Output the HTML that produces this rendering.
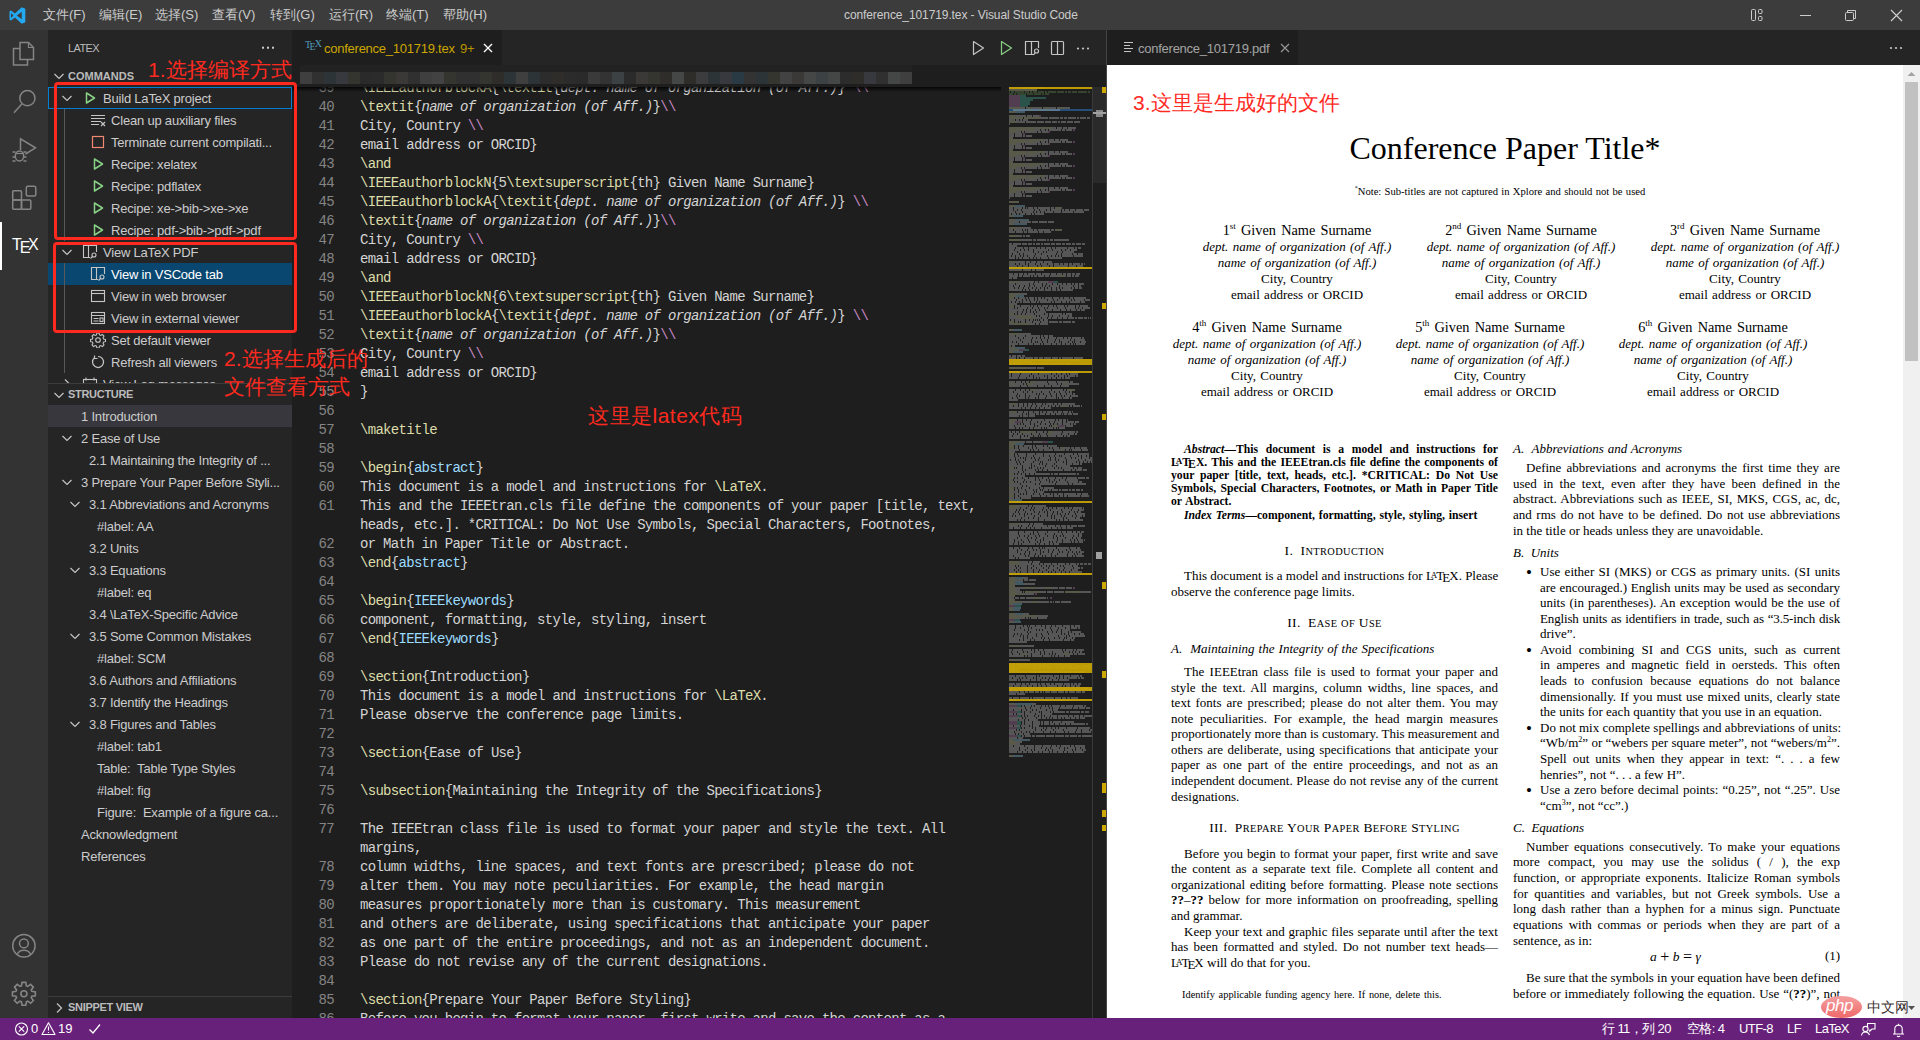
<!DOCTYPE html><html><head><meta charset="utf-8"><style>
*{box-sizing:border-box}
body{margin:0;width:1920px;height:1040px;overflow:hidden;background:#1e1e1e;position:relative;font-family:"Liberation Sans",sans-serif;font-size:13px;color:#ccc}
.a{position:absolute}
.t{position:absolute;white-space:pre;line-height:22px}
.mono{font-family:"Liberation Mono",monospace}
.code{position:absolute;left:0;white-space:pre;font-family:"Liberation Mono",monospace;font-size:14px;letter-spacing:-0.703px;line-height:19px;color:#d4d4d4}
.ln{position:absolute;width:42px;text-align:right;white-space:pre;font-family:"Liberation Mono",monospace;font-size:14px;letter-spacing:-0.703px;line-height:19px;color:#858585}
.k{color:#dcdcaa}.v{color:#9cdcfe}.p{color:#c586c0}.i{font-style:italic}
.row{position:absolute;left:0;width:244px;height:22px;line-height:22px;white-space:pre;color:#cccccc}
.serif{font-family:"Liberation Serif",serif;color:#000}
</style></head><body>
<div class="a" style="left:0;top:0;width:1920px;height:30px;background:#3c3c3c"></div>
<svg class="a" style="left:9px;top:7px" width="17" height="17" viewBox="0 0 100 100">
<path d="M96 11 L75 1 L35 38 L12 21 L3 25 L3 75 L12 79 L35 62 L75 99 L96 89 Z M75 28 L75 72 L46 50 Z M12 36 L26 50 L12 64 Z" fill="#23a9f2"/>
</svg>
<div class="t" style="left:43px;top:4px;color:#cccccc;font-size:13px">文件(F)</div>
<div class="t" style="left:99px;top:4px;color:#cccccc;font-size:13px">编辑(E)</div>
<div class="t" style="left:155px;top:4px;color:#cccccc;font-size:13px">选择(S)</div>
<div class="t" style="left:212px;top:4px;color:#cccccc;font-size:13px">查看(V)</div>
<div class="t" style="left:270px;top:4px;color:#cccccc;font-size:13px">转到(G)</div>
<div class="t" style="left:329px;top:4px;color:#cccccc;font-size:13px">运行(R)</div>
<div class="t" style="left:386px;top:4px;color:#cccccc;font-size:13px">终端(T)</div>
<div class="t" style="left:443px;top:4px;color:#cccccc;font-size:13px">帮助(H)</div>
<div class="t" style="left:844px;top:4px;color:#cccccc;font-size:12px;letter-spacing:-0.1px">conference_101719.tex - Visual Studio Code</div>
<svg class="a" style="left:1740px;top:0" width="180" height="30">
<g fill="none" stroke="#cccccc" stroke-width="1">
<rect x="11.5" y="9.5" width="4" height="11" rx="1"/><rect x="18.5" y="9.5" width="3.5" height="4" rx="1"/><rect x="18.5" y="16.5" width="3.5" height="4" rx="1"/>
<line x1="60" y1="15.5" x2="71" y2="15.5"/>
<rect x="105.5" y="12.5" width="8" height="8" rx="1"/><path d="M107.5 12.5 V10.5 H115.5 V18.5 H113.5"/>
<path d="M151 10 L162 21 M162 10 L151 21" stroke-width="1.2"/>
</g></svg>
<div class="a" style="left:0;top:30px;width:48px;height:988px;background:#333333"></div>
<svg class="a" style="left:0;top:30px" width="48" height="988">
<g fill="none" stroke="#858585" stroke-width="1.5">
<path d="M20 12.5 H28.5 L33.5 17.5 V29.5 H20 Z"/><path d="M28.5 12.5 V17.5 H33.5" stroke-width="1.2"/><path d="M20 18.5 H13.5 V35 H27.5 V29.5"/>
<circle cx="27.4" cy="68.2" r="7.6"/><path d="M21.8 74 L14 82.8"/>
<path d="M20.5 120 V108.8 L35.5 117.8 L25.5 124"/>
<ellipse cx="19.5" cy="126" rx="4.2" ry="5"/><path d="M15.5 123.5 H23.5" stroke-width="1.2"/><path d="M12.5 122 H15.5 M23.5 122 H26.5 M12.5 127 H15 M24 127 H26.5 M12.5 131 H15.5 M23.5 131 H26.5" stroke-width="1.3"/>
<rect x="12.7" y="160.7" width="8.8" height="9.3" rx="1"/><rect x="12.7" y="170" width="8.8" height="9.3" rx="1"/><rect x="21.5" y="170" width="9.3" height="9.3" rx="1"/><rect x="26.3" y="156.3" width="9.5" height="9.8" rx="1.5"/>
<circle cx="23.9" cy="915.8" r="11.2"/><circle cx="23.9" cy="913.4" r="4.4"/><path d="M17.2 924.2 A7.5 7 0 0 1 30.6 924.2"/>
<path d="M31.82 961.33 L35.34 961.90 L35.34 965.70 L31.82 966.27 L31.25 967.65 L33.34 970.54 L30.64 973.24 L27.75 971.15 L26.37 971.72 L25.80 975.24 L22.00 975.24 L21.43 971.72 L20.05 971.15 L17.16 973.24 L14.46 970.54 L16.55 967.65 L15.98 966.27 L12.46 965.70 L12.46 961.90 L15.98 961.33 L16.55 959.95 L14.46 957.06 L17.16 954.36 L20.05 956.45 L21.43 955.88 L22.00 952.36 L25.80 952.36 L26.37 955.88 L27.75 956.45 L30.64 954.36 L33.34 957.06 L31.25 959.95 Z" stroke-width="1.6"/><circle cx="23.9" cy="963.8" r="3" stroke-width="1.6"/>
</g>
<rect x="0" y="192" width="2" height="48" fill="#ffffff"/>
</svg>
<div class="t" style="left:12px;top:235.3px;color:#fff;font-size:16px;line-height:20px">T<span style="position:relative;top:3px;margin-left:-2px">E</span><span style="margin-left:-2.5px">X</span></div>
<div class="a" style="left:48px;top:30px;width:244px;height:988px;background:#252526;overflow:hidden" id="side">
<div class="t" style="left:20px;top:7px;font-size:11px;color:#bbbbbb;letter-spacing:-0.6px">LATEX</div>
<svg class="a" style="left:210px;top:10px" width="20" height="16"><g fill="#cccccc"><rect x="4" y="6.7" width="2" height="2"/><rect x="9" y="6.7" width="2" height="2"/><rect x="14" y="6.7" width="2" height="2"/></g></svg>
<div class="a" style="left:0;top:35px;width:244px;height:22px">
<svg class="a" style="left:3px;top:3px" width="16" height="16"><path d="M3.5 6 L8 10.5 L12.5 6" fill="none" stroke="#c5c5c5" stroke-width="1.2"/></svg>
<div class="t" style="left:20px;top:0;font-size:11px;font-weight:bold;color:#bbbbbb">COMMANDS</div>
</div>
<div class="a" style="left:0;top:57px;width:244px;height:22px;border:1px solid #007fd4"></div>
<div class="a" style="left:0;top:233px;width:244px;height:22px;background:#094771"></div>
<div class="a" style="left:16px;top:79px;width:1px;height:132px;background:#585858"></div>
<div class="a" style="left:16px;top:233px;width:1px;height:110px;background:#585858"></div>
<div class="a" style="left:0;top:57px;width:244px;height:22px">
<svg class="a" style="left:11px;top:3px" width="16" height="16"><path d="M3.5 6 L8 10.5 L12.5 6" fill="none" stroke="#c5c5c5" stroke-width="1.2"/></svg>
<svg class="a" style="left:34px;top:3px" width="16" height="16"><path d="M4.5 3 L12.5 8 L4.5 13 Z" fill="none" stroke="#89d185" stroke-width="1.5" stroke-linejoin="round"/></svg>
<div class="t" style="left:55px;top:1px;color:#cccccc;letter-spacing:-0.2px">Build LaTeX project</div>
</div>
<div class="a" style="left:0;top:79px;width:244px;height:22px">
<svg class="a" style="left:42px;top:3px" width="16" height="16"><g stroke="#c5c5c5" stroke-width="1"><path d="M1 3.5h14M1 6.5h14M1 9.5h10M1 12.5h8"/><path d="M11 10 L15 14 M15 10 L11 14" stroke-width="1.2"/></g></svg>
<div class="t" style="left:63px;top:1px;color:#cccccc;letter-spacing:-0.2px">Clean up auxiliary files</div>
</div>
<div class="a" style="left:0;top:101px;width:244px;height:22px">
<svg class="a" style="left:42px;top:3px" width="16" height="16"><rect x="2.5" y="2.5" width="11" height="11" fill="none" stroke="#f48771" stroke-width="1.2"/></svg>
<div class="t" style="left:63px;top:1px;color:#cccccc;letter-spacing:-0.2px">Terminate current compilati...</div>
</div>
<div class="a" style="left:0;top:123px;width:244px;height:22px">
<svg class="a" style="left:42px;top:3px" width="16" height="16"><path d="M4.5 3 L12.5 8 L4.5 13 Z" fill="none" stroke="#89d185" stroke-width="1.5" stroke-linejoin="round"/></svg>
<div class="t" style="left:63px;top:1px;color:#cccccc;letter-spacing:-0.2px">Recipe: xelatex</div>
</div>
<div class="a" style="left:0;top:145px;width:244px;height:22px">
<svg class="a" style="left:42px;top:3px" width="16" height="16"><path d="M4.5 3 L12.5 8 L4.5 13 Z" fill="none" stroke="#89d185" stroke-width="1.5" stroke-linejoin="round"/></svg>
<div class="t" style="left:63px;top:1px;color:#cccccc;letter-spacing:-0.2px">Recipe: pdflatex</div>
</div>
<div class="a" style="left:0;top:167px;width:244px;height:22px">
<svg class="a" style="left:42px;top:3px" width="16" height="16"><path d="M4.5 3 L12.5 8 L4.5 13 Z" fill="none" stroke="#89d185" stroke-width="1.5" stroke-linejoin="round"/></svg>
<div class="t" style="left:63px;top:1px;color:#cccccc;letter-spacing:-0.2px">Recipe: xe-&gt;bib-&gt;xe-&gt;xe</div>
</div>
<div class="a" style="left:0;top:189px;width:244px;height:22px">
<svg class="a" style="left:42px;top:3px" width="16" height="16"><path d="M4.5 3 L12.5 8 L4.5 13 Z" fill="none" stroke="#89d185" stroke-width="1.5" stroke-linejoin="round"/></svg>
<div class="t" style="left:63px;top:1px;color:#cccccc;letter-spacing:-0.2px">Recipe: pdf-&gt;bib-&gt;pdf-&gt;pdf</div>
</div>
<div class="a" style="left:0;top:211px;width:244px;height:22px">
<svg class="a" style="left:11px;top:3px" width="16" height="16"><path d="M3.5 6 L8 10.5 L12.5 6" fill="none" stroke="#c5c5c5" stroke-width="1.2"/></svg>
<svg class="a" style="left:34px;top:3px" width="16" height="16"><g fill="none" stroke="#c5c5c5" stroke-width="1.1"><path d="M8 13.5 H1.5 V1.5 H14.5 V8"/><path d="M6.5 1.5 V13.5"/><circle cx="12" cy="11" r="2"/><path d="M10.5 12.5 L8.5 14.5"/></g></svg>
<div class="t" style="left:55px;top:1px;color:#cccccc;letter-spacing:-0.2px">View LaTeX PDF</div>
</div>
<div class="a" style="left:0;top:233px;width:244px;height:22px">
<svg class="a" style="left:42px;top:3px" width="16" height="16"><g fill="none" stroke="#c5c5c5" stroke-width="1.1"><path d="M8 13.5 H1.5 V1.5 H14.5 V8"/><path d="M6.5 1.5 V13.5"/><circle cx="12" cy="11" r="2"/><path d="M10.5 12.5 L8.5 14.5"/></g></svg>
<div class="t" style="left:63px;top:1px;color:#ffffff;letter-spacing:-0.2px">View in VSCode tab</div>
</div>
<div class="a" style="left:0;top:255px;width:244px;height:22px">
<svg class="a" style="left:42px;top:3px" width="16" height="16"><g fill="none" stroke="#c5c5c5" stroke-width="1.1"><rect x="1.5" y="2.5" width="13" height="11"/><path d="M1.5 5.5 H14.5"/></g></svg>
<div class="t" style="left:63px;top:1px;color:#cccccc;letter-spacing:-0.2px">View in web browser</div>
</div>
<div class="a" style="left:0;top:277px;width:244px;height:22px">
<svg class="a" style="left:42px;top:3px" width="16" height="16"><g fill="none" stroke="#c5c5c5" stroke-width="1.1"><rect x="1.5" y="2.5" width="13" height="11"/><path d="M1.5 5.5 H14.5 M3.5 8.5 H8.5 M3.5 11 H8.5"/><rect x="10" y="8" width="3" height="3.5"/></g></svg>
<div class="t" style="left:63px;top:1px;color:#cccccc;letter-spacing:-0.2px">View in external viewer</div>
</div>
<div class="a" style="left:0;top:299px;width:244px;height:22px">
<svg class="a" style="left:42px;top:3px" width="16" height="16" viewBox="0 0 24 24"><g fill="none" stroke="#c5c5c5" stroke-width="1.6"><circle cx="12" cy="12" r="3.5"/><path d="M10.3 1.5h3.4l.6 2.8 1.8.9 2.5-1.4 2.4 2.4-1.4 2.5.8 1.8 2.8.6v3.4l-2.8.6-.8 1.8 1.4 2.5-2.4 2.4-2.5-1.4-1.8.8-.6 2.8h-3.4l-.6-2.8-1.8-.8-2.5 1.4-2.4-2.4 1.4-2.5-.8-1.8-2.8-.6v-3.4l2.8-.6.8-1.8-1.4-2.5 2.4-2.4 2.5 1.4 1.8-.9z"/></g></svg>
<div class="t" style="left:63px;top:1px;color:#cccccc;letter-spacing:-0.2px">Set default viewer</div>
</div>
<div class="a" style="left:0;top:321px;width:244px;height:22px">
<svg class="a" style="left:42px;top:3px" width="16" height="16"><g fill="none" stroke="#c5c5c5" stroke-width="1.2"><path d="M4.5 3.8 A5.5 5.5 0 1 0 8 2.5"/><path d="M4.5 1.5 V4.5 H7.5"/></g></svg>
<div class="t" style="left:63px;top:1px;color:#cccccc;letter-spacing:-0.2px">Refresh all viewers</div>
</div>
<div class="a" style="left:0;top:343px;width:244px;height:22px">
<svg class="a" style="left:11px;top:3px" width="16" height="16"><path d="M6 3.5 L10.5 8 L6 12.5" fill="none" stroke="#c5c5c5" stroke-width="1.2"/></svg>
<svg class="a" style="left:34px;top:3px" width="16" height="16"><g fill="none" stroke="#c5c5c5" stroke-width="1.1"><rect x="1.5" y="3.5" width="13" height="11"/><path d="M4 1.5v3M12 1.5v3M4 8h8M4 11h8"/></g></svg>
<div class="t" style="left:55px;top:1px;color:#cccccc;letter-spacing:-0.2px">View Log messages</div>
</div>
<div class="a" style="left:0;top:353px;width:244px;height:22px;background:#252526;border-top:1px solid #3c3c3c">
<svg class="a" style="left:3px;top:3px" width="16" height="16"><path d="M3.5 6 L8 10.5 L12.5 6" fill="none" stroke="#c5c5c5" stroke-width="1.2"/></svg>
<div class="t" style="left:20px;top:-1px;font-size:11px;font-weight:bold;color:#bbbbbb;letter-spacing:-0.3px">STRUCTURE</div>
</div>
<div class="a" style="left:0;top:375px;width:244px;height:22px;background:#37373d"></div>
<div class="a" style="left:0;top:375px;width:244px;height:22px">
<div class="t" style="left:33px;top:1px;color:#cccccc;letter-spacing:-0.2px">1 Introduction</div>
</div>
<div class="a" style="left:0;top:397px;width:244px;height:22px">
<svg class="a" style="left:11px;top:3px" width="16" height="16"><path d="M3.5 6 L8 10.5 L12.5 6" fill="none" stroke="#c5c5c5" stroke-width="1.2"/></svg>
<div class="t" style="left:33px;top:1px;color:#cccccc;letter-spacing:-0.2px">2 Ease of Use</div>
</div>
<div class="a" style="left:0;top:419px;width:244px;height:22px">
<div class="t" style="left:41px;top:1px;color:#cccccc;letter-spacing:-0.2px">2.1 Maintaining the Integrity of ...</div>
</div>
<div class="a" style="left:0;top:441px;width:244px;height:22px">
<svg class="a" style="left:11px;top:3px" width="16" height="16"><path d="M3.5 6 L8 10.5 L12.5 6" fill="none" stroke="#c5c5c5" stroke-width="1.2"/></svg>
<div class="t" style="left:33px;top:1px;color:#cccccc;letter-spacing:-0.2px">3 Prepare Your Paper Before Styli...</div>
</div>
<div class="a" style="left:0;top:463px;width:244px;height:22px">
<svg class="a" style="left:19px;top:3px" width="16" height="16"><path d="M3.5 6 L8 10.5 L12.5 6" fill="none" stroke="#c5c5c5" stroke-width="1.2"/></svg>
<div class="t" style="left:41px;top:1px;color:#cccccc;letter-spacing:-0.2px">3.1 Abbreviations and Acronyms</div>
</div>
<div class="a" style="left:0;top:485px;width:244px;height:22px">
<div class="t" style="left:49px;top:1px;color:#cccccc;letter-spacing:-0.2px">#label: AA</div>
</div>
<div class="a" style="left:0;top:507px;width:244px;height:22px">
<div class="t" style="left:41px;top:1px;color:#cccccc;letter-spacing:-0.2px">3.2 Units</div>
</div>
<div class="a" style="left:0;top:529px;width:244px;height:22px">
<svg class="a" style="left:19px;top:3px" width="16" height="16"><path d="M3.5 6 L8 10.5 L12.5 6" fill="none" stroke="#c5c5c5" stroke-width="1.2"/></svg>
<div class="t" style="left:41px;top:1px;color:#cccccc;letter-spacing:-0.2px">3.3 Equations</div>
</div>
<div class="a" style="left:0;top:551px;width:244px;height:22px">
<div class="t" style="left:49px;top:1px;color:#cccccc;letter-spacing:-0.2px">#label: eq</div>
</div>
<div class="a" style="left:0;top:573px;width:244px;height:22px">
<div class="t" style="left:41px;top:1px;color:#cccccc;letter-spacing:-0.2px">3.4 \LaTeX-Specific Advice</div>
</div>
<div class="a" style="left:0;top:595px;width:244px;height:22px">
<svg class="a" style="left:19px;top:3px" width="16" height="16"><path d="M3.5 6 L8 10.5 L12.5 6" fill="none" stroke="#c5c5c5" stroke-width="1.2"/></svg>
<div class="t" style="left:41px;top:1px;color:#cccccc;letter-spacing:-0.2px">3.5 Some Common Mistakes</div>
</div>
<div class="a" style="left:0;top:617px;width:244px;height:22px">
<div class="t" style="left:49px;top:1px;color:#cccccc;letter-spacing:-0.2px">#label: SCM</div>
</div>
<div class="a" style="left:0;top:639px;width:244px;height:22px">
<div class="t" style="left:41px;top:1px;color:#cccccc;letter-spacing:-0.2px">3.6 Authors and Affiliations</div>
</div>
<div class="a" style="left:0;top:661px;width:244px;height:22px">
<div class="t" style="left:41px;top:1px;color:#cccccc;letter-spacing:-0.2px">3.7 Identify the Headings</div>
</div>
<div class="a" style="left:0;top:683px;width:244px;height:22px">
<svg class="a" style="left:19px;top:3px" width="16" height="16"><path d="M3.5 6 L8 10.5 L12.5 6" fill="none" stroke="#c5c5c5" stroke-width="1.2"/></svg>
<div class="t" style="left:41px;top:1px;color:#cccccc;letter-spacing:-0.2px">3.8 Figures and Tables</div>
</div>
<div class="a" style="left:0;top:705px;width:244px;height:22px">
<div class="t" style="left:49px;top:1px;color:#cccccc;letter-spacing:-0.2px">#label: tab1</div>
</div>
<div class="a" style="left:0;top:727px;width:244px;height:22px">
<div class="t" style="left:49px;top:1px;color:#cccccc;letter-spacing:-0.2px">Table:  Table Type Styles</div>
</div>
<div class="a" style="left:0;top:749px;width:244px;height:22px">
<div class="t" style="left:49px;top:1px;color:#cccccc;letter-spacing:-0.2px">#label: fig</div>
</div>
<div class="a" style="left:0;top:771px;width:244px;height:22px">
<div class="t" style="left:49px;top:1px;color:#cccccc;letter-spacing:-0.2px">Figure:  Example of a figure ca...</div>
</div>
<div class="a" style="left:0;top:793px;width:244px;height:22px">
<div class="t" style="left:33px;top:1px;color:#cccccc;letter-spacing:-0.2px">Acknowledgment</div>
</div>
<div class="a" style="left:0;top:815px;width:244px;height:22px">
<div class="t" style="left:33px;top:1px;color:#cccccc;letter-spacing:-0.2px">References</div>
</div>
<div class="a" style="left:0;top:966px;width:244px;height:22px;border-top:1px solid #3c3c3c">
<svg class="a" style="left:3px;top:3px" width="16" height="16"><path d="M6 3.5 L10.5 8 L6 12.5" fill="none" stroke="#c5c5c5" stroke-width="1.2"/></svg>
<div class="t" style="left:20px;top:-1px;font-size:11px;font-weight:bold;color:#bbbbbb;letter-spacing:-0.3px">SNIPPET VIEW</div>
</div>
</div>
<div class="a" style="left:292px;top:30px;width:815px;height:35px;background:#252526"></div>
<div class="a" style="left:292px;top:30px;width:210px;height:35px;background:#1e1e1e"></div>
<div class="t" style="left:305px;top:39px;font-family:'Liberation Serif',serif;font-size:10px;color:#519aba;line-height:12px">T<span style="position:relative;top:2px;margin-left:-1.5px">E</span><span style="position:relative;top:-1px;margin-left:-1px">X</span></div>
<div class="t" style="left:324px;top:38px;color:#cca700;font-size:13px;letter-spacing:-0.25px">conference_101719.tex <span style="color:#b89500;margin-left:2px">9+</span></div>
<svg class="a" style="left:481px;top:41px" width="14" height="14"><path d="M3 3 L11 11 M11 3 L3 11" stroke="#ffffff" stroke-width="1.4"/></svg>
<svg class="a" style="left:965px;top:38px" width="135" height="20"><g fill="none" stroke-width="1.2" stroke-linejoin="round">
<path d="M8.5 3.5 L18.5 10 L8.5 16.5 Z" stroke="#c5c5c5"/>
<path d="M36.5 3.5 L46.5 10 L36.5 16.5 Z" stroke="#89d185"/>
<path d="M69 16.5 H60.5 V3.5 H73.5 V10" stroke="#c5c5c5"/><path d="M66.5 3.5 V16.5" stroke="#c5c5c5"/><circle cx="71.5" cy="13" r="2" stroke="#c5c5c5"/><path d="M70 14.8 L68.5 17" stroke="#c5c5c5"/>
<rect x="86.5" y="3.5" width="12" height="13" rx="1" stroke="#c5c5c5"/><path d="M92.5 3.5 V16.5" stroke="#c5c5c5"/>
</g><g fill="#c5c5c5"><circle cx="113" cy="10.5" r="1.1"/><circle cx="118" cy="10.5" r="1.1"/><circle cx="123" cy="10.5" r="1.1"/></g></svg>
<div class="a" style="left:300px;top:65px;width:612px;height:7px;background:#222222"></div>
<div class="a" style="left:300px;top:72px;width:12px;height:12px;background:#3f3f3f"></div><div class="a" style="left:312px;top:72px;width:12px;height:12px;background:#303030"></div><div class="a" style="left:324px;top:72px;width:12px;height:12px;background:#2d3438"></div><div class="a" style="left:336px;top:72px;width:12px;height:12px;background:#37393e"></div><div class="a" style="left:348px;top:72px;width:12px;height:12px;background:#35352f"></div><div class="a" style="left:360px;top:72px;width:12px;height:12px;background:#2a2a2a"></div><div class="a" style="left:372px;top:72px;width:12px;height:12px;background:#2b2b2b"></div><div class="a" style="left:384px;top:72px;width:12px;height:12px;background:#35352f"></div><div class="a" style="left:396px;top:72px;width:12px;height:12px;background:#3a3937"></div><div class="a" style="left:408px;top:72px;width:12px;height:12px;background:#303030"></div><div class="a" style="left:420px;top:72px;width:12px;height:12px;background:#3f3f3f"></div><div class="a" style="left:432px;top:72px;width:12px;height:12px;background:#424242"></div><div class="a" style="left:444px;top:72px;width:12px;height:12px;background:#35352f"></div><div class="a" style="left:456px;top:72px;width:12px;height:12px;background:#303030"></div><div class="a" style="left:468px;top:72px;width:12px;height:12px;background:#303030"></div><div class="a" style="left:480px;top:72px;width:12px;height:12px;background:#35352f"></div><div class="a" style="left:492px;top:72px;width:12px;height:12px;background:#2f2d2a"></div><div class="a" style="left:504px;top:72px;width:12px;height:12px;background:#2d3438"></div><div class="a" style="left:516px;top:72px;width:12px;height:12px;background:#3f3f3f"></div><div class="a" style="left:528px;top:72px;width:12px;height:12px;background:#2d3438"></div><div class="a" style="left:540px;top:72px;width:12px;height:12px;background:#2c2c2c"></div><div class="a" style="left:552px;top:72px;width:12px;height:12px;background:#2f2d2a"></div><div class="a" style="left:564px;top:72px;width:12px;height:12px;background:#2b2b2b"></div><div class="a" style="left:576px;top:72px;width:12px;height:12px;background:#2a2a2a"></div><div class="a" style="left:588px;top:72px;width:12px;height:12px;background:#3a3a3a"></div><div class="a" style="left:600px;top:72px;width:12px;height:12px;background:#333333"></div><div class="a" style="left:612px;top:72px;width:12px;height:12px;background:#3c4244"></div><div class="a" style="left:624px;top:72px;width:12px;height:12px;background:#2b2b2b"></div><div class="a" style="left:636px;top:72px;width:12px;height:12px;background:#3a3937"></div><div class="a" style="left:648px;top:72px;width:12px;height:12px;background:#35352f"></div><div class="a" style="left:660px;top:72px;width:12px;height:12px;background:#2f2d2a"></div><div class="a" style="left:672px;top:72px;width:12px;height:12px;background:#454646"></div><div class="a" style="left:684px;top:72px;width:12px;height:12px;background:#2f2d2a"></div><div class="a" style="left:696px;top:72px;width:12px;height:12px;background:#3c3c3f"></div><div class="a" style="left:708px;top:72px;width:12px;height:12px;background:#2d3438"></div><div class="a" style="left:720px;top:72px;width:12px;height:12px;background:#37393e"></div><div class="a" style="left:732px;top:72px;width:12px;height:12px;background:#2a3a45"></div><div class="a" style="left:744px;top:72px;width:12px;height:12px;background:#333333"></div><div class="a" style="left:756px;top:72px;width:12px;height:12px;background:#2d3438"></div><div class="a" style="left:768px;top:72px;width:12px;height:12px;background:#35352f"></div><div class="a" style="left:780px;top:72px;width:12px;height:12px;background:#424242"></div><div class="a" style="left:792px;top:72px;width:12px;height:12px;background:#3a3937"></div><div class="a" style="left:804px;top:72px;width:12px;height:12px;background:#454646"></div><div class="a" style="left:816px;top:72px;width:12px;height:12px;background:#3c4244"></div><div class="a" style="left:828px;top:72px;width:12px;height:12px;background:#454646"></div><div class="a" style="left:840px;top:72px;width:12px;height:12px;background:#2c2c2c"></div><div class="a" style="left:852px;top:72px;width:12px;height:12px;background:#2f2d2a"></div><div class="a" style="left:864px;top:72px;width:12px;height:12px;background:#37393e"></div><div class="a" style="left:876px;top:72px;width:12px;height:12px;background:#303030"></div><div class="a" style="left:888px;top:72px;width:12px;height:12px;background:#454646"></div><div class="a" style="left:900px;top:72px;width:12px;height:12px;background:#3f3f3f"></div>
<div class="a" style="left:292px;top:87px;width:716px;height:931px;overflow:hidden;background:#1e1e1e">
<div class="ln" style="left:0;top:-8.5px;width:42px">39</div>
<div class="code" style="left:68px;top:-8.5px"><span class=k>\IEEEauthorblockA</span>{<span class=k>\textit</span>{<span class=i>dept. name of organization (of Aff.)</span>} <span class=p>\\</span></div>
<div class="ln" style="left:0;top:10.5px;width:42px">40</div>
<div class="code" style="left:68px;top:10.5px"><span class=k>\textit</span>{<span class=i>name of organization (of Aff.)</span>}<span class=p>\\</span></div>
<div class="ln" style="left:0;top:29.5px;width:42px">41</div>
<div class="code" style="left:68px;top:29.5px">City, Country <span class=p>\\</span></div>
<div class="ln" style="left:0;top:48.5px;width:42px">42</div>
<div class="code" style="left:68px;top:48.5px">email address or ORCID}</div>
<div class="ln" style="left:0;top:67.5px;width:42px">43</div>
<div class="code" style="left:68px;top:67.5px"><span class=k>\and</span></div>
<div class="ln" style="left:0;top:86.5px;width:42px">44</div>
<div class="code" style="left:68px;top:86.5px"><span class=k>\IEEEauthorblockN</span>{5<span class=k>\textsuperscript</span>{th} Given Name Surname}</div>
<div class="ln" style="left:0;top:105.5px;width:42px">45</div>
<div class="code" style="left:68px;top:105.5px"><span class=k>\IEEEauthorblockA</span>{<span class=k>\textit</span>{<span class=i>dept. name of organization (of Aff.)</span>} <span class=p>\\</span></div>
<div class="ln" style="left:0;top:124.5px;width:42px">46</div>
<div class="code" style="left:68px;top:124.5px"><span class=k>\textit</span>{<span class=i>name of organization (of Aff.)</span>}<span class=p>\\</span></div>
<div class="ln" style="left:0;top:143.5px;width:42px">47</div>
<div class="code" style="left:68px;top:143.5px">City, Country <span class=p>\\</span></div>
<div class="ln" style="left:0;top:162.5px;width:42px">48</div>
<div class="code" style="left:68px;top:162.5px">email address or ORCID}</div>
<div class="ln" style="left:0;top:181.5px;width:42px">49</div>
<div class="code" style="left:68px;top:181.5px"><span class=k>\and</span></div>
<div class="ln" style="left:0;top:200.5px;width:42px">50</div>
<div class="code" style="left:68px;top:200.5px"><span class=k>\IEEEauthorblockN</span>{6<span class=k>\textsuperscript</span>{th} Given Name Surname}</div>
<div class="ln" style="left:0;top:219.5px;width:42px">51</div>
<div class="code" style="left:68px;top:219.5px"><span class=k>\IEEEauthorblockA</span>{<span class=k>\textit</span>{<span class=i>dept. name of organization (of Aff.)</span>} <span class=p>\\</span></div>
<div class="ln" style="left:0;top:238.5px;width:42px">52</div>
<div class="code" style="left:68px;top:238.5px"><span class=k>\textit</span>{<span class=i>name of organization (of Aff.)</span>}<span class=p>\\</span></div>
<div class="ln" style="left:0;top:257.5px;width:42px">53</div>
<div class="code" style="left:68px;top:257.5px">City, Country <span class=p>\\</span></div>
<div class="ln" style="left:0;top:276.5px;width:42px">54</div>
<div class="code" style="left:68px;top:276.5px">email address or ORCID}</div>
<div class="ln" style="left:0;top:295.5px;width:42px">55</div>
<div class="code" style="left:68px;top:295.5px">}</div>
<div class="ln" style="left:0;top:314.5px;width:42px">56</div>
<div class="code" style="left:68px;top:314.5px"></div>
<div class="ln" style="left:0;top:333.5px;width:42px">57</div>
<div class="code" style="left:68px;top:333.5px"><span class=k>\maketitle</span></div>
<div class="ln" style="left:0;top:352.5px;width:42px">58</div>
<div class="code" style="left:68px;top:352.5px"></div>
<div class="ln" style="left:0;top:371.5px;width:42px">59</div>
<div class="code" style="left:68px;top:371.5px"><span class=k>\begin</span>{<span class=v>abstract</span>}</div>
<div class="ln" style="left:0;top:390.5px;width:42px">60</div>
<div class="code" style="left:68px;top:390.5px">This document is a model and instructions for <span class=k>\LaTeX</span>.</div>
<div class="ln" style="left:0;top:409.5px;width:42px">61</div>
<div class="code" style="left:68px;top:409.5px">This and the IEEEtran.cls file define the components of your paper [title, text,</div>
<div class="code" style="left:68px;top:428.5px">heads, etc.]. *CRITICAL: Do Not Use Symbols, Special Characters, Footnotes,</div>
<div class="ln" style="left:0;top:447.5px;width:42px">62</div>
<div class="code" style="left:68px;top:447.5px">or Math in Paper Title or Abstract.</div>
<div class="ln" style="left:0;top:466.5px;width:42px">63</div>
<div class="code" style="left:68px;top:466.5px"><span class=k>\end</span>{<span class=v>abstract</span>}</div>
<div class="ln" style="left:0;top:485.5px;width:42px">64</div>
<div class="code" style="left:68px;top:485.5px"></div>
<div class="ln" style="left:0;top:504.5px;width:42px">65</div>
<div class="code" style="left:68px;top:504.5px"><span class=k>\begin</span>{<span class=v>IEEEkeywords</span>}</div>
<div class="ln" style="left:0;top:523.5px;width:42px">66</div>
<div class="code" style="left:68px;top:523.5px">component, formatting, style, styling, insert</div>
<div class="ln" style="left:0;top:542.5px;width:42px">67</div>
<div class="code" style="left:68px;top:542.5px"><span class=k>\end</span>{<span class=v>IEEEkeywords</span>}</div>
<div class="ln" style="left:0;top:561.5px;width:42px">68</div>
<div class="code" style="left:68px;top:561.5px"></div>
<div class="ln" style="left:0;top:580.5px;width:42px">69</div>
<div class="code" style="left:68px;top:580.5px"><span class=k>\section</span>{Introduction}</div>
<div class="ln" style="left:0;top:599.5px;width:42px">70</div>
<div class="code" style="left:68px;top:599.5px">This document is a model and instructions for <span class=k>\LaTeX</span>.</div>
<div class="ln" style="left:0;top:618.5px;width:42px">71</div>
<div class="code" style="left:68px;top:618.5px">Please observe the conference page limits.</div>
<div class="ln" style="left:0;top:637.5px;width:42px">72</div>
<div class="code" style="left:68px;top:637.5px"></div>
<div class="ln" style="left:0;top:656.5px;width:42px">73</div>
<div class="code" style="left:68px;top:656.5px"><span class=k>\section</span>{Ease of Use}</div>
<div class="ln" style="left:0;top:675.5px;width:42px">74</div>
<div class="code" style="left:68px;top:675.5px"></div>
<div class="ln" style="left:0;top:694.5px;width:42px">75</div>
<div class="code" style="left:68px;top:694.5px"><span class=k>\subsection</span>{Maintaining the Integrity of the Specifications}</div>
<div class="ln" style="left:0;top:713.5px;width:42px">76</div>
<div class="code" style="left:68px;top:713.5px"></div>
<div class="ln" style="left:0;top:732.5px;width:42px">77</div>
<div class="code" style="left:68px;top:732.5px">The IEEEtran class file is used to format your paper and style the text. All</div>
<div class="code" style="left:68px;top:751.5px">margins,</div>
<div class="ln" style="left:0;top:770.5px;width:42px">78</div>
<div class="code" style="left:68px;top:770.5px">column widths, line spaces, and text fonts are prescribed; please do not</div>
<div class="ln" style="left:0;top:789.5px;width:42px">79</div>
<div class="code" style="left:68px;top:789.5px">alter them. You may note peculiarities. For example, the head margin</div>
<div class="ln" style="left:0;top:808.5px;width:42px">80</div>
<div class="code" style="left:68px;top:808.5px">measures proportionately more than is customary. This measurement</div>
<div class="ln" style="left:0;top:827.5px;width:42px">81</div>
<div class="code" style="left:68px;top:827.5px">and others are deliberate, using specifications that anticipate your paper</div>
<div class="ln" style="left:0;top:846.5px;width:42px">82</div>
<div class="code" style="left:68px;top:846.5px">as one part of the entire proceedings, and not as an independent document.</div>
<div class="ln" style="left:0;top:865.5px;width:42px">83</div>
<div class="code" style="left:68px;top:865.5px">Please do not revise any of the current designations.</div>
<div class="ln" style="left:0;top:884.5px;width:42px">84</div>
<div class="code" style="left:68px;top:884.5px"></div>
<div class="ln" style="left:0;top:903.5px;width:42px">85</div>
<div class="code" style="left:68px;top:903.5px"><span class=k>\section</span>{Prepare Your Paper Before Styling}</div>
<div class="ln" style="left:0;top:922.5px;width:42px">86</div>
<div class="code" style="left:68px;top:922.5px">Before you begin to format your paper, first write and save the content as a</div>
<div class="a" style="left:0;top:0;width:709px;height:5px;background:linear-gradient(#000000cc,#0000)"></div>
</div>
<svg class="a" style="left:0;top:0;pointer-events:none" width="1920" height="1040"><rect x="1009" y="109" width="84" height="2" fill="#264f78"/><path d="M1009 88h14M1009 96h11M1009 98h11M1009 100h11M1009 102h11M1009 104h11M1009 106h11M1039 116h2M1073 130h2M1048 132h2M1023 134h2M1073 142h2M1048 144h2M1023 146h2M1073 154h2M1048 156h2M1023 158h2M1073 166h2M1048 168h2M1023 170h2M1073 178h2M1048 180h2M1023 182h2M1073 190h2M1048 192h2M1023 194h2M1042 268h4M1052 268h4M1048 282h6M1019 350h6M1029 360h6M1053 360h6M1009 362h6M1049 364h6M1042 372h6M1015 422h6M1058 426h6M1042 442h6M1058 502h5M1016 574h4M1073 588h2M1035 594h2M1050 598h2M1009 606h6M1009 620h6M1063 664h5M1050 666h5M1023 668h5M1053 668h5M1080 668h5M1050 672h5M1071 688h5M1081 690h5M1076 700h5M1009 706h8M1009 712h8M1009 716h8M1009 722h8M1009 724h8M1009 728h8M1009 736h8" stroke="#c586c0" stroke-width="1.2" opacity="0.62"/><path d="M1023 88h22M1020 108h2M1026 108h1M1032 108h7M1043 108h1M1049 108h7M1057 108h2M1064 108h6M1013 110h1M1019 110h8M1033 110h4M1042 110h3M1050 110h10M1015 116h11M1027 116h5M1033 116h6M1009 118h1M1040 118h8M1049 118h10M1060 118h3M1064 118h3M1068 118h8M1077 118h2M1080 118h6M1087 118h3M1009 120h6M1016 120h3M1020 120h2M1023 120h5M1016 122h9M1026 122h10M1037 122h7M1045 122h6M1052 122h5M1058 122h2M1061 122h5M1067 122h6M1074 122h6M1009 124h1M1016 128h1M1034 128h2M1052 128h4M1057 128h5M1063 128h4M1068 128h8M1026 130h1M1034 130h6M1041 130h4M1046 130h2M1049 130h12M1062 130h3M1066 130h6M1016 132h5M1022 132h2M1025 132h12M1038 132h3M1042 132h6M1009 134h5M1015 134h7M1009 136h5M1015 136h7M1023 136h2M1026 136h6M1026 140h2M1044 140h4M1049 140h5M1055 140h4M1060 140h8M1026 142h1M1034 142h6M1041 142h4M1046 142h2M1049 142h12M1062 142h3M1066 142h6M1016 144h5M1022 144h2M1025 144h12M1038 144h3M1042 144h6M1009 146h5M1015 146h7M1009 148h5M1015 148h7M1023 148h2M1026 148h6M1026 152h2M1044 152h4M1049 152h5M1055 152h4M1060 152h8M1026 154h1M1034 154h6M1041 154h4M1046 154h2M1049 154h12M1062 154h3M1066 154h6M1016 156h5M1022 156h2M1025 156h12M1038 156h3M1042 156h6M1009 158h5M1015 158h7M1009 160h5M1015 160h7M1023 160h2M1026 160h6M1026 164h2M1044 164h4M1049 164h5M1055 164h4M1060 164h8M1026 166h1M1034 166h6M1041 166h4M1046 166h2M1049 166h12M1062 166h3M1066 166h6M1016 168h5M1022 168h2M1025 168h12M1038 168h3M1042 168h6M1009 170h5M1015 170h7M1009 172h5M1015 172h7M1023 172h2M1026 172h6M1026 176h2M1044 176h4M1049 176h5M1055 176h4M1060 176h8M1026 178h1M1034 178h6M1041 178h4M1046 178h2M1049 178h12M1062 178h3M1066 178h6M1016 180h5M1022 180h2M1025 180h12M1038 180h3M1042 180h6M1009 182h5M1015 182h7M1009 184h5M1015 184h7M1023 184h2M1026 184h6M1026 188h2M1044 188h4M1049 188h5M1055 188h4M1060 188h8M1026 190h1M1034 190h6M1041 190h4M1046 190h2M1049 190h12M1062 190h3M1066 190h6M1016 192h5M1022 192h2M1025 192h12M1038 192h3M1042 192h6M1009 194h5M1015 194h7M1009 196h5M1015 196h7M1023 196h2M1026 196h6M1009 198h1M1009 208h4M1014 208h8M1023 208h2M1026 208h1M1028 208h5M1034 208h3M1038 208h12M1051 208h3M1061 208h1M1009 210h4M1014 210h3M1018 210h3M1022 210h12M1035 210h4M1040 210h6M1047 210h3M1051 210h10M1062 210h2M1065 210h4M1070 210h5M1076 210h7M1084 210h5M1009 212h6M1016 212h6M1023 212h10M1034 212h2M1037 212h3M1041 212h3M1045 212h8M1054 212h7M1062 212h11M1074 212h10M1009 214h2M1012 214h4M1017 214h2M1020 214h5M1026 214h5M1032 214h2M1035 214h9M1009 222h10M1020 222h11M1032 222h6M1039 222h8M1048 222h6M1017 228h14M1009 230h4M1014 230h8M1023 230h2M1026 230h1M1028 230h5M1034 230h3M1038 230h12M1051 230h3M1061 230h1M1009 232h6M1016 232h7M1024 232h3M1028 232h10M1039 232h4M1044 232h7M1017 236h5M1023 236h2M1026 236h4M1020 240h12M1033 240h3M1037 240h9M1047 240h2M1050 240h3M1054 240h15M1009 244h3M1013 244h8M1022 244h5M1028 244h4M1033 244h2M1036 244h4M1041 244h2M1044 244h6M1051 244h4M1056 244h5M1062 244h3M1066 244h5M1072 244h3M1076 244h5M1082 244h3M1009 246h8M1009 248h6M1016 248h7M1024 248h4M1029 248h7M1037 248h3M1041 248h4M1046 248h5M1052 248h3M1056 248h11M1068 248h6M1075 248h2M1078 248h3M1009 250h5M1015 250h5M1021 250h3M1025 250h3M1029 250h4M1034 250h14M1049 250h3M1053 250h8M1062 250h3M1066 250h4M1071 250h6M1009 252h8M1018 252h15M1034 252h4M1039 252h4M1044 252h2M1047 252h10M1058 252h4M1063 252h11M1009 254h3M1013 254h6M1020 254h3M1024 254h11M1036 254h5M1042 254h14M1057 254h4M1062 254h10M1073 254h4M1078 254h5M1009 256h2M1012 256h3M1016 256h4M1021 256h2M1024 256h3M1028 256h6M1035 256h12M1048 256h3M1052 256h3M1056 256h2M1059 256h2M1062 256h11M1074 256h9M1009 258h6M1016 258h2M1019 258h3M1023 258h6M1030 258h3M1034 258h2M1037 258h3M1041 258h7M1049 258h13M1017 262h8M1026 262h4M1031 262h5M1037 262h6M1044 262h8M1009 264h6M1016 264h3M1020 264h5M1026 264h2M1029 264h6M1036 264h4M1041 264h6M1048 264h5M1054 264h5M1060 264h3M1064 264h4M1069 264h3M1073 264h7M1081 264h2M1084 264h1M1009 266h8M1018 266h4M1023 266h5M1029 266h8M1038 266h3M1042 266h7M1050 266h3M1054 266h14M1069 266h7M1077 266h6M1009 268h11M1021 268h6M1028 268h4M1033 268h8M1050 268h2M1062 268h5M1068 268h3M1072 268h4M1077 268h11M1089 268h2M1009 270h13M1023 270h8M1032 270h3M1036 270h8M1009 274h4M1014 274h4M1019 274h4M1024 274h3M1028 274h7M1036 274h5M1042 274h8M1051 274h5M1057 274h5M1063 274h3M1067 274h4M1072 274h3M1076 274h4M1009 276h9M1019 276h3M1023 276h7M1031 276h2M1034 276h3M1038 276h6M1045 276h4M1050 276h9M1065 276h1M1067 276h4M1072 276h2M1075 276h4M1009 278h3M1013 278h4M1020 282h14M1035 282h3M1039 282h9M1009 284h6M1016 284h13M1030 284h3M1034 284h8M1043 284h3M1047 284h5M1053 284h4M1058 284h4M1063 284h3M1067 284h4M1072 284h2M1075 284h3M1079 284h5M1009 286h4M1014 286h5M1020 286h4M1025 286h4M1030 286h4M1035 286h7M1043 286h2M1046 286h3M1050 286h9M1060 286h13M1074 286h4M1079 286h2M1009 288h5M1015 288h3M1019 288h4M1024 288h4M1029 288h3M1033 288h3M1037 288h3M1041 288h3M1045 288h2M1048 288h3M1052 288h4M1057 288h2M1060 288h2M1063 288h8M1072 288h2M1075 288h3M1079 288h3M1009 290h13M1023 290h2M1026 290h3M1030 290h5M1036 290h2M1039 290h5M1045 290h6M1052 290h4M1057 290h3M1061 290h12M1020 294h7M1015 298h3M1019 298h6M1026 298h2M1029 298h5M1035 298h2M1038 298h3M1042 298h2M1045 298h7M1053 298h6M1060 298h3M1064 298h5M1070 298h3M1074 298h12M1009 300h7M1017 300h5M1023 300h3M1027 300h2M1030 300h4M1035 300h2M1038 300h9M1048 300h5M1054 300h3M1058 300h13M1072 300h2M1075 300h9M1085 300h5M1009 302h2M1012 302h3M1016 302h3M1020 302h2M1023 302h7M1031 302h5M1037 302h2M1040 302h11M1052 302h2M1055 302h6M1062 302h4M1067 302h2M1070 302h10M1081 302h4M1009 304h8M1015 306h5M1021 306h9M1031 306h2M1034 306h3M1038 306h3M1042 306h6M1049 306h4M1054 306h2M1057 306h7M1065 306h2M1068 306h7M1076 306h3M1080 306h8M1009 308h5M1015 308h2M1018 308h9M1028 308h4M1033 308h5M1039 308h5M1045 308h2M1048 308h9M1058 308h7M1066 308h9M1076 308h2M1079 308h3M1083 308h7M1009 310h14M1024 310h2M1027 310h3M1031 310h4M1036 310h3M1040 310h5M1046 310h6M1053 310h7M1061 310h5M1067 310h3M1071 310h5M1077 310h3M1081 310h4M1009 312h8M1018 312h4M1023 312h3M1027 312h3M1031 312h2M1034 312h2M1037 312h9M1015 314h2M1018 314h3M1022 314h3M1026 314h8M1035 314h9M1045 314h3M1049 314h13M1063 314h2M1066 314h6M1009 316h6M1031 316h5M1037 316h2M1040 316h8M1049 316h3M1053 316h6M1060 316h8M1069 316h3M1009 318h10M1035 318h6M1042 318h5M1048 318h3M1052 318h5M1058 318h4M1063 318h4M1068 318h6M1075 318h2M1078 318h5M1084 318h3M1088 318h1M1090 318h1M1009 320h1M1011 320h3M1015 320h10M1026 320h3M1030 320h3M1034 320h1M1036 320h1M1038 320h1M1040 320h3M1044 320h4M1015 322h3M1019 322h1M1021 322h4M1026 322h6M1033 322h7M1041 322h7M1049 322h9M1059 322h3M1063 322h8M1072 322h3M1009 324h4M1029 324h6M1036 324h3M1040 324h8M1020 334h11M1009 336h6M1016 336h9M1026 336h14M1041 336h2M1044 336h4M1049 336h4M1009 338h9M1019 338h4M1024 338h8M1033 338h3M1037 338h3M1041 338h3M1045 338h3M1049 338h7M1057 338h6M1064 338h3M1068 338h3M1072 338h9M1082 338h2M1009 340h11M1021 340h10M1032 340h9M1042 340h5M1048 340h7M1056 340h3M1060 340h10M1071 340h3M1075 340h10M1009 342h3M1013 342h3M1017 342h5M1023 342h8M1032 342h3M1036 342h1M1038 342h4M1043 342h4M1048 342h6M1055 342h4M1060 342h1M1062 342h6M1069 342h3M1073 342h1M1075 342h5M1081 342h5M1009 344h9M1019 344h9M1029 344h4M1034 344h6M1041 344h2M1044 344h7M1052 344h4M1057 344h4M1062 344h3M1066 344h4M1071 344h2M1074 344h1M1076 344h9M1009 346h2M1012 346h3M1009 350h4M1009 356h2M1012 356h4M1017 356h4M1022 356h3M1009 358h7M1017 358h2M1020 358h4M1025 358h8M1034 358h4M1039 358h4M1044 358h7M1052 358h6M1059 358h2M1062 358h11M1074 358h9M1009 360h3M1013 360h9M1023 360h3M1027 360h2M1039 360h3M1043 360h3M1047 360h6M1063 360h2M1066 360h2M1069 360h10M1019 362h3M1023 362h6M1030 362h2M1009 364h3M1013 364h9M1023 364h2M1026 364h1M1028 364h9M1038 364h10M1060 364h2M1063 364h1M1065 364h1M1067 364h3M1020 368h1M1027 368h9M1037 368h7M1009 372h6M1016 372h3M1020 372h8M1029 372h6M1041 372h1M1052 372h2M1055 372h5M1061 372h10M1072 372h7M1009 374h2M1012 374h8M1021 374h10M1032 374h6M1044 374h7M1052 374h4M1057 374h4M1062 374h4M1067 374h2M1070 374h8M1009 376h2M1012 376h7M1020 376h9M1030 376h3M1034 376h10M1045 376h2M1048 376h6M1055 376h3M1059 376h5M1065 376h2M1068 376h7M1076 376h2M1009 378h9M1019 378h7M1027 378h6M1034 378h2M1037 378h2M1040 378h7M1048 378h3M1052 378h4M1057 378h4M1062 378h2M1065 378h5M1009 382h6M1016 382h5M1022 382h3M1026 382h3M1035 382h12M1048 382h8M1057 382h12M1070 382h3M1014 384h9M1024 384h2M1032 384h16M1049 384h8M1058 384h3M1067 384h12M1009 386h11M1021 386h6M1028 386h9M1038 386h6M1045 386h6M1052 386h8M1061 386h8M1009 390h6M1016 390h4M1021 390h4M1026 390h3M1035 390h16M1052 390h11M1064 390h2M1067 390h1M1074 390h1M1009 392h4M1014 392h9M1024 392h3M1028 392h4M1033 392h8M1042 392h7M1050 392h4M1055 392h4M1060 392h5M1066 392h3M1070 392h2M1009 394h8M1018 394h7M1026 394h10M1037 394h2M1040 394h3M1044 394h6M1051 394h5M1057 394h3M1061 394h5M1067 394h5M1073 394h2M1009 396h7M1017 396h2M1020 396h5M1026 396h3M1030 396h8M1039 396h7M1047 396h4M1052 396h4M1057 396h4M1062 396h2M1065 396h5M1071 396h7M1009 398h3M1013 398h4M1018 398h7M1026 398h2M1029 398h6M1036 398h2M1039 398h6M1046 398h10M1057 398h1M1059 398h3M1063 398h6M1070 398h2M1009 400h9M1009 404h1M1017 404h1M1019 404h4M1024 404h3M1028 404h4M1033 404h2M1036 404h6M1043 404h2M1046 404h7M1054 404h3M1058 404h3M1062 404h13M1009 406h4M1014 406h4M1019 406h4M1024 406h3M1028 406h3M1032 406h4M1037 406h4M1042 406h6M1049 406h2M1052 406h3M1056 406h3M1060 406h1M1068 406h1M1070 406h2M1073 406h7M1081 406h1M1009 408h12M1022 408h3M1026 408h4M1031 408h4M1036 408h3M1040 408h4M1045 408h6M1009 412h1M1016 412h1M1018 412h5M1024 412h4M1029 412h4M1034 412h5M1040 412h2M1043 412h3M1047 412h6M1054 412h3M1058 412h4M1063 412h5M1069 412h2M1072 412h1M1009 414h13M1023 414h3M1027 414h1M1029 414h6M1036 414h3M1040 414h5M1046 414h4M1051 414h4M1056 414h5M1062 414h1M1064 414h3M1068 414h4M1073 414h5M1009 416h10M1020 416h2M1023 416h5M1029 416h6M1009 420h1M1016 420h1M1018 420h4M1023 420h3M1027 420h4M1032 420h12M1045 420h10M1056 420h2M1059 420h3M1063 420h3M1067 420h1M1014 422h1M1021 422h1M1023 422h7M1031 422h6M1038 422h3M1042 422h7M1050 422h4M1055 422h7M1063 422h3M1067 422h7M1075 422h4M1009 424h8M1018 424h2M1021 424h2M1024 424h6M1031 424h3M1035 424h5M1041 424h4M1046 424h4M1051 424h2M1054 424h3M1058 424h4M1063 424h7M1071 424h2M1074 424h2M1009 426h5M1015 426h10M1026 426h8M1035 426h2M1038 426h11M1050 426h1M1057 426h1M1064 426h1M1066 426h7M1009 428h6M1016 428h3M1020 428h2M1023 428h6M1030 428h3M1034 428h7M1042 428h2M1045 428h1M1047 428h6M1054 428h2M1057 428h1M1059 428h6M1009 432h2M1012 432h3M1016 432h3M1025 432h1M1035 432h1M1037 432h6M1044 432h3M1053 432h9M1063 432h12M1076 432h2M1009 434h4M1014 434h3M1018 434h4M1023 434h8M1032 434h7M1040 434h6M1052 434h9M1062 434h6M1069 434h5M1075 434h2M1009 436h3M1013 436h7M1021 436h3M1025 436h2M1028 436h5M1034 436h4M1039 436h1M1041 436h6M1048 436h8M1057 436h6M1064 436h2M1067 436h3M1009 438h11M1021 438h9M1020 442h5M1026 442h6M1033 442h9M1015 446h3M1019 446h4M1024 446h8M1033 446h2M1036 446h7M1044 446h3M1048 446h9M1015 448h3M1019 448h9M1029 448h3M1033 448h3M1037 448h12M1050 448h2M1053 448h6M1060 448h1M1064 448h6M1071 448h3M1075 448h5M1081 448h6M1009 450h10M1020 450h10M1031 450h2M1034 450h4M1039 450h4M1044 450h9M1054 450h11M1066 450h3M1070 450h1M1072 450h9M1082 450h6M1009 452h6M1015 454h2M1018 454h8M1027 454h8M1036 454h7M1044 454h11M1056 454h8M1065 454h8M1074 454h3M1078 454h11M1009 456h5M1015 456h3M1019 456h7M1027 456h6M1034 456h9M1044 456h5M1050 456h4M1055 456h4M1060 456h1M1062 456h8M1071 456h7M1079 456h2M1082 456h4M1087 456h2M1009 458h6M1016 458h4M1021 458h2M1024 458h1M1026 458h5M1032 458h2M1035 458h4M1040 458h10M1051 458h4M1056 458h9M1066 458h5M1072 458h3M1076 458h5M1082 458h7M1090 458h2M1009 460h1M1011 460h4M1016 460h2M1019 460h6M1026 460h9M1036 460h2M1039 460h9M1049 460h1M1051 460h4M1056 460h2M1059 460h7M1067 460h11M1079 460h6M1086 460h6M1009 462h7M1017 462h2M1020 462h3M1024 462h9M1034 462h6M1041 462h1M1043 462h13M1057 462h6M1064 462h2M1067 462h9M1077 462h2M1080 462h3M1084 462h3M1088 462h2M1091 462h1M1009 464h8M1018 464h2M1021 464h10M1032 464h7M1040 464h2M1043 464h3M1047 464h7M1055 464h11M1067 464h5M1073 464h6M1080 464h2M1009 466h13M1023 466h8M1032 466h2M1035 466h10M1046 466h6M1053 466h3M1057 466h13M1015 468h1M1017 468h5M1023 468h6M1030 468h1M1032 468h5M1038 468h2M1041 468h2M1044 468h10M1055 468h3M1059 468h2M1062 468h11M1074 468h3M1078 468h4M1009 470h13M1023 470h2M1026 470h9M1036 470h2M1039 470h3M1043 470h4M1048 470h15M1064 470h7M1072 470h3M1076 470h6M1083 470h4M1009 472h9M1019 472h4M1024 472h12M1015 474h2M1018 474h3M1022 474h3M1026 474h3M1030 474h4M1035 474h15M1051 474h2M1054 474h4M1059 474h17M1077 474h2M1009 476h16M1015 478h2M1018 478h4M1023 478h5M1029 478h6M1036 478h2M1039 478h3M1043 478h5M1049 478h6M1056 478h6M1063 478h3M1067 478h10M1078 478h7M1086 478h3M1009 480h4M1014 480h10M1025 480h10M1036 480h3M1040 480h6M1047 480h2M1050 480h4M1055 480h4M1060 480h5M1066 480h12M1015 482h2M1018 482h5M1024 482h2M1027 482h3M1031 482h9M1041 482h8M1050 482h2M1053 482h3M1057 482h10M1068 482h10M1079 482h3M1009 484h11M1021 484h14M1036 484h3M1040 484h15M1056 484h12M1069 484h3M1073 484h13M1009 486h13M1023 486h3M1027 486h14M1015 488h2M1018 488h3M1022 488h7M1030 488h9M1040 488h3M1044 488h10M1015 490h3M1019 490h6M1026 490h7M1034 490h2M1037 490h3M1041 490h1M1043 490h5M1049 490h2M1052 490h6M1059 490h2M1062 490h6M1069 490h2M1072 490h3M1076 490h4M1081 490h2M1009 492h9M1019 492h7M1027 492h7M1035 492h1M1037 492h7M1015 494h5M1021 494h2M1024 494h2M1027 494h6M1034 494h5M1040 494h3M1044 494h6M1051 494h2M1054 494h3M1058 494h5M1064 494h12M1077 494h4M1082 494h6M1015 496h3M1019 496h12M1032 496h8M1041 496h5M1047 496h6M1054 496h5M1060 496h3M1064 496h3M1068 496h12M1081 496h8M1009 498h5M1015 498h5M1021 498h10M1009 502h2M1012 502h9M1022 502h5M1028 502h6M1035 502h3M1039 502h7M1047 502h7M1055 502h2M1067 502h1M1020 506h8M1029 506h3M1033 506h13M1016 508h4M1021 508h5M1027 508h4M1032 508h2M1035 508h8M1044 508h4M1049 508h3M1053 508h3M1057 508h7M1065 508h3M1069 508h3M1073 508h9M1083 508h1M1009 510h7M1017 510h2M1020 510h3M1024 510h6M1031 510h2M1034 510h8M1043 510h3M1047 510h3M1051 510h10M1062 510h9M1072 510h6M1079 510h5M1009 512h6M1016 512h2M1019 512h6M1026 512h8M1035 512h4M1040 512h4M1045 512h2M1048 512h5M1054 512h3M1058 512h4M1063 512h6M1070 512h4M1075 512h2M1078 512h3M1009 514h4M1014 514h5M1020 514h4M1025 514h2M1028 514h3M1032 514h6M1039 514h8M1048 514h4M1053 514h4M1058 514h2M1061 514h4M1066 514h2M1069 514h6M1076 514h9M1009 516h3M1013 516h2M1016 516h8M1025 516h9M1035 516h5M1041 516h6M1048 516h3M1052 516h2M1055 516h6M1062 516h2M1065 516h7M1073 516h3M1077 516h5M1083 516h2M1009 518h12M1022 518h6M1029 518h4M1034 518h4M1039 518h12M1052 518h2M1055 518h8M1064 518h2M1067 518h8M1076 518h4M1009 520h8M1018 520h2M1021 520h3M1025 520h13M1039 520h5M1045 520h11M1057 520h2M1060 520h3M1064 520h4M1069 520h14M1020 524h9M1030 524h3M1034 524h9M1009 526h9M1019 526h2M1022 526h6M1029 526h3M1033 526h14M1048 526h7M1056 526h4M1061 526h5M1067 526h3M1071 526h6M1078 526h7M1009 528h4M1014 528h6M1021 528h5M1027 528h3M1031 528h3M1035 528h6M1042 528h9M1052 528h5M1058 528h3M1062 528h4M1067 528h6M1009 532h9M1019 532h5M1025 532h8M1034 532h3M1038 532h9M1048 532h10M1059 532h2M1062 532h4M1067 532h5M1073 532h3M1077 532h3M1081 532h3M1009 534h9M1019 534h11M1031 534h2M1034 534h4M1039 534h6M1046 534h8M1055 534h7M1063 534h15M1079 534h3M1009 536h10M1020 536h4M1025 536h3M1029 536h6M1036 536h3M1040 536h7M1048 536h5M1054 536h2M1057 536h3M1061 536h2M1064 536h9M1074 536h4M1079 536h3M1009 538h8M1018 538h9M1028 538h3M1032 538h4M1037 538h6M1044 538h9M1054 538h3M1058 538h7M1066 538h6M1073 538h3M1077 538h4M1009 540h5M1015 540h6M1022 540h6M1029 540h6M1036 540h4M1041 540h2M1044 540h13M1058 540h4M1063 540h7M1071 540h3M1075 540h2M1078 540h5M1084 540h1M1009 542h5M1015 542h3M1019 542h4M1024 542h5M1030 542h7M1038 542h2M1041 542h8M1050 542h2M1053 542h3M1057 542h5M1063 542h8M1072 542h2M1075 542h3M1079 542h4M1009 544h4M1014 544h4M1019 544h2M1022 544h13M1036 544h3M1040 544h4M1045 544h4M1050 544h3M1054 544h5M1009 548h4M1014 548h5M1020 548h8M1029 548h3M1033 548h6M1040 548h2M1043 548h1M1045 548h11M1057 548h12M1070 548h6M1077 548h3M1009 550h8M1018 550h3M1022 550h5M1028 550h5M1034 550h2M1037 550h3M1041 550h7M1049 550h4M1054 550h4M1059 550h7M1067 550h3M1071 550h10M1009 552h8M1018 552h7M1026 552h3M1030 552h10M1041 552h2M1044 552h4M1049 552h3M1053 552h6M1060 552h2M1063 552h5M1069 552h3M1073 552h3M1077 552h2M1080 552h4M1009 554h11M1021 554h3M1025 554h4M1030 554h5M1036 554h4M1041 554h10M1052 554h5M1058 554h9M1068 554h6M1075 554h2M1078 554h4M1009 556h4M1014 556h11M1026 556h2M1029 556h5M1035 556h3M1039 556h3M1043 556h2M1046 556h5M1052 556h3M1056 556h11M1068 556h4M1073 556h2M1076 556h8M1009 558h6M1016 558h2M1019 558h11M1020 562h8M1029 562h3M1033 562h7M1019 564h12M1032 564h7M1040 564h3M1044 564h7M1052 564h5M1058 564h7M1066 564h3M1070 564h6M1077 564h2M1080 564h3M1084 564h3M1088 564h3M1009 566h6M1016 566h2M1019 566h8M1028 566h5M1034 566h7M1042 566h4M1047 566h2M1050 566h3M1054 566h6M1061 566h2M1064 566h8M1073 566h5M1009 568h7M1017 568h3M1021 568h6M1028 568h3M1032 568h4M1037 568h6M1044 568h4M1049 568h8M1058 568h6M1065 568h8M1074 568h6M1081 568h2M1009 570h5M1015 570h3M1019 570h8M1028 570h5M1034 570h5M1040 570h6M1047 570h6M1054 570h5M1060 570h3M1064 570h7M1072 570h6M1009 572h7M1017 572h3M1021 572h6M1028 572h5M1034 572h4M1039 572h3M1043 572h5M1049 572h2M1052 572h3M1056 572h5M1062 572h3M1066 572h3M1070 572h12M1009 574h7M1025 574h3M1029 574h4M1034 574h2M1037 574h3M1041 574h9M1051 574h2M1054 574h1M1056 574h9M1022 578h6M1017 580h6M1024 580h4M1029 580h7M1024 584h11M1016 588h8M1036 588h9M1052 588h6M1059 588h6M1066 588h6M1015 590h5M1016 592h6M1023 592h1M1032 592h1M1040 592h6M1047 592h6M1054 592h10M1072 592h1M1080 592h11M1016 594h1M1024 594h10M1009 598h5M1015 598h4M1020 598h5M1026 598h7M1040 598h6M1047 598h1M1021 602h10M1038 602h11M1050 602h2M1053 602h1M1055 602h5M1061 602h10M1023 614h6M1020 616h1M1037 616h11M1017 618h8M1026 618h2M1029 618h1M1031 618h6M1038 618h9M1009 626h6M1016 626h7M1024 626h3M1028 626h1M1030 626h5M1036 626h5M1042 626h3M1046 626h5M1052 626h3M1056 626h6M1063 626h7M1071 626h3M1075 626h5M1009 628h6M1016 628h4M1021 628h7M1029 628h2M1032 628h13M1046 628h4M1051 628h7M1059 628h6M1066 628h4M1071 628h6M1078 628h2M1009 630h5M1015 630h9M1025 630h3M1029 630h7M1037 630h2M1040 630h2M1043 630h8M1052 630h5M1058 630h3M1062 630h8M1009 632h18M1028 632h2M1031 632h16M1048 632h4M1053 632h3M1057 632h4M1062 632h6M1069 632h2M1072 632h9M1009 634h5M1015 634h2M1018 634h3M1022 634h6M1029 634h7M1037 634h4M1042 634h6M1049 634h12M1062 634h2M1065 634h3M1069 634h5M1075 634h4M1080 634h4M1009 636h4M1014 636h6M1021 636h2M1024 636h3M1028 636h8M1037 636h5M1043 636h15M1059 636h7M1067 636h2M1070 636h15M1009 638h14M1024 638h3M1028 638h4M1033 638h8M1042 638h2M1045 638h3M1049 638h5M1055 638h4M1060 638h4M1065 638h1M1067 638h5M1073 638h2M1009 640h10M1020 640h3M1024 640h6M1031 640h3M1035 640h8M1044 640h5M1050 640h13M1064 640h6M1071 640h3M1009 642h18M1018 646h16M1009 650h3M1013 650h9M1023 650h8M1032 650h2M1035 650h3M1039 650h4M1044 650h18M1063 650h2M1066 650h7M1074 650h2M1077 650h7M1009 652h2M1012 652h5M1018 652h5M1024 652h3M1028 652h6M1035 652h5M1041 652h3M1045 652h7M1053 652h10M1064 652h5M1070 652h2M1073 652h2M1076 652h3M1080 652h2M1009 654h3M1013 654h6M1020 654h1M1027 654h4M1032 654h8M1041 654h3M1045 654h4M1050 654h2M1053 654h2M1056 654h7M1069 654h4M1074 654h3M1078 654h7M1009 656h15M1025 656h2M1028 656h3M1032 656h10M1043 656h8M1052 656h2M1055 656h3M1059 656h5M1065 656h5M1018 660h12M1009 664h6M1016 664h6M1023 664h9M1033 664h13M1047 664h6M1054 664h8M1072 664h1M1074 664h3M1009 666h8M1018 666h11M1030 666h7M1038 666h3M1042 666h7M1059 666h1M1061 666h5M1067 666h6M1074 666h2M1077 666h3M1081 666h9M1009 668h7M1017 668h2M1020 668h2M1032 668h5M1038 668h3M1042 668h3M1046 668h6M1062 668h2M1065 668h2M1068 668h11M1089 668h2M1009 670h6M1016 670h2M1009 672h3M1013 672h9M1023 672h2M1026 672h1M1028 672h9M1038 672h11M1060 672h3M1064 672h3M1068 672h5M1074 672h1M1081 672h3M1009 676h6M1016 676h9M1026 676h10M1037 676h2M1040 676h13M1054 676h5M1060 676h3M1064 676h6M1071 676h8M1080 676h2M1009 678h3M1013 678h6M1020 678h2M1023 678h3M1027 678h6M1034 678h2M1037 678h5M1043 678h2M1046 678h3M1050 678h6M1057 678h2M1060 678h3M1064 678h3M1068 678h9M1078 678h2M1081 678h3M1009 680h8M1018 680h2M1021 680h9M1031 680h5M1037 680h3M1041 680h7M1049 680h3M1053 680h5M1059 680h10M1009 684h6M1016 684h5M1022 684h3M1026 684h3M1030 684h7M1038 684h2M1041 684h4M1046 684h4M1051 684h3M1055 684h8M1064 684h6M1071 684h2M1074 684h3M1078 684h3M1009 686h4M1014 686h6M1021 686h6M1028 686h4M1033 686h4M1038 686h3M1042 686h4M1047 686h10M1058 686h4M1063 686h2M1066 686h4M1071 686h4M1076 686h4M1009 688h9M1019 688h3M1023 688h12M1036 688h6M1043 688h2M1046 688h5M1052 688h2M1055 688h15M1080 688h1M1082 688h6M1009 690h4M1014 690h4M1019 690h4M1024 690h8M1033 690h3M1037 690h11M1049 690h6M1056 690h2M1059 690h5M1065 690h2M1068 690h4M1073 690h7M1090 690h1M1009 692h10M1020 692h4M1025 692h3M1029 692h5M1035 692h4M1040 692h2M1043 692h1M1045 692h5M1051 692h6M1058 692h6M1065 692h3M1069 692h6M1076 692h5M1082 692h3M1009 694h7M1017 694h8M1009 698h3M1013 698h6M1020 698h9M1030 698h2M1033 698h11M1045 698h9M1055 698h6M1062 698h4M1067 698h3M1071 698h7M1009 700h8M1018 700h6M1025 700h8M1034 700h2M1037 700h3M1041 700h8M1050 700h16M1067 700h8M1085 700h1M1032 704h4M1022 706h2M1025 706h6M1032 706h2M1035 706h6M1042 706h3M1046 706h2M1049 706h2M1052 706h8M1061 706h4M1066 706h7M1074 706h9M1084 706h2M1009 708h16M1026 708h4M1031 708h9M1041 708h8M1050 708h2M1053 708h6M1060 708h12M1073 708h5M1079 708h6M1086 708h4M1009 710h4M1014 710h7M1022 710h4M1027 710h5M1033 710h3M1037 710h9M1047 710h5M1053 710h5M1022 712h2M1025 712h5M1031 712h8M1040 712h1M1042 712h8M1051 712h2M1054 712h11M1066 712h3M1070 712h10M1081 712h3M1085 712h4M1009 714h4M1014 714h2M1017 714h7M1025 714h10M1036 714h5M1042 714h10M1022 716h2M1025 716h2M1028 716h6M1035 716h3M1039 716h2M1042 716h2M1045 716h5M1051 716h6M1058 716h10M1069 716h4M1074 716h5M1080 716h3M1084 716h8M1009 718h13M1023 718h2M1026 718h10M1037 718h4M1042 718h4M1047 718h2M1050 718h2M1053 718h4M1058 718h3M1062 718h2M1065 718h5M1071 718h4M1076 718h3M1080 718h5M1009 720h9M1019 720h5M1025 720h3M1029 720h9M1022 722h2M1025 722h7M1033 722h7M1041 722h2M1044 722h5M1050 722h2M1053 722h8M1062 722h12M1022 724h2M1025 724h7M1033 724h7M1041 724h2M1044 724h5M1050 724h4M1055 724h4M1060 724h5M1066 724h4M1071 724h14M1086 724h2M1009 726h4M1014 726h6M1021 726h8M1030 726h2M1033 726h6M1022 728h2M1025 728h7M1033 728h2M1036 728h7M1044 728h2M1047 728h4M1052 728h3M1056 728h2M1059 728h7M1067 728h10M1078 728h12M1009 730h7M1017 730h2M1020 730h15M1036 730h5M1042 730h3M1046 730h7M1054 730h9M1064 730h12M1077 730h4M1082 730h7M1090 730h2M1009 732h5M1015 732h6M1022 732h4M1027 732h2M1030 732h3M1034 732h9M1044 732h6M1051 732h4M1056 732h8M1065 732h3M1069 732h6M1076 732h5M1082 732h9M1009 734h6M1016 734h2M1019 734h4M1024 734h6M1022 736h2M1025 736h6M1032 736h3M1036 736h9M1046 736h8M1055 736h9M1065 736h4M1070 736h7M1078 736h3M1082 736h10M1009 738h8M1018 738h5M1016 742h6M1015 744h5M1009 746h4M1014 746h10M1025 746h9M1035 746h7M1043 746h8M1052 746h4M1057 746h3M1061 746h9M1071 746h3M1075 746h10M1009 748h10M1020 748h7M1028 748h6M1035 748h6M1042 748h4M1047 748h3M1051 748h8M1060 748h4M1065 748h2M1068 748h7M1076 748h4M1081 748h4M1009 750h10M1020 750h5M1026 750h5M1032 750h2M1035 750h10M1046 750h2M1049 750h3M1053 750h11M1065 750h7M1073 750h2M1076 750h6M1083 750h3M1009 752h8M1018 752h4M1023 752h4M1028 752h4M1033 752h5M1039 752h3M1043 752h6M1050 752h2M1053 752h4M1058 752h5M1064 752h3M1068 752h5M1074 752h10" stroke="#d4d4d4" stroke-width="1.2" opacity="0.62"/><path d="M1009 90h28M1009 108h11M1022 108h3M1027 108h5M1039 108h3M1044 108h5M1059 108h5M1014 110h5M1027 110h6M1037 110h5M1045 110h5M1009 112h6M1009 116h6M1010 118h13M1024 118h16M1009 122h7M1009 128h7M1017 128h17M1036 128h16M1009 130h17M1027 130h7M1009 132h7M1009 138h4M1009 140h17M1028 140h16M1009 142h17M1027 142h7M1009 144h7M1009 150h4M1009 152h17M1028 152h16M1009 154h17M1027 154h7M1009 156h7M1009 162h4M1009 164h17M1028 164h16M1009 166h17M1027 166h7M1009 168h7M1009 174h4M1009 176h17M1028 176h16M1009 178h17M1027 178h7M1009 180h7M1009 186h4M1009 188h17M1028 188h16M1009 190h17M1027 190h7M1009 192h7M1009 202h10M1009 206h6M1055 208h6M1009 216h4M1009 220h6M1009 224h4M1009 228h8M1055 230h6M1009 236h8M1009 240h11M1009 262h8M1059 276h6M1009 282h11M1009 294h11M1009 296h6M1009 298h5M1009 306h5M1009 314h5M1015 316h16M1019 318h16M1009 322h5M1013 324h16M1009 330h4M1009 334h11M1009 348h6M1013 350h6M1009 352h4M1009 368h11M1021 368h6M1036 372h5M1039 374h5M1030 382h5M1009 384h5M1027 384h5M1062 384h5M1030 390h5M1068 390h6M1010 404h7M1061 406h7M1010 412h6M1010 420h6M1009 422h5M1052 426h5M1020 432h5M1026 432h9M1048 432h5M1047 434h5M1009 442h11M1009 444h6M1009 446h5M1009 448h5M1061 448h3M1009 454h5M1009 468h5M1009 474h5M1009 478h5M1009 482h5M1009 488h5M1009 490h5M1009 494h5M1009 496h5M1009 500h4M1009 506h11M1009 508h7M1009 524h11M1009 562h11M1009 564h10M1009 578h6M1009 580h8M1009 582h6M1009 584h6M1009 586h6M1009 588h7M1024 588h12M1045 588h7M1009 590h6M1009 592h7M1025 592h7M1033 592h7M1065 592h7M1073 592h7M1009 594h7M1017 594h7M1009 596h6M1033 598h7M1009 600h6M1009 602h12M1031 602h7M1009 604h4M1009 608h4M1009 610h4M1009 614h6M1009 616h11M1021 616h16M1009 618h8M1009 622h4M1009 646h9M1021 654h6M1063 654h6M1009 660h9M1075 672h6M1009 704h6M1009 740h4M1009 742h7M1009 744h6M1009 756h4" stroke="#dcdcaa" stroke-width="1.2" opacity="0.62"/><path d="M1009 92h1M1011 92h3M1015 92h9M1025 92h4M1030 92h2M1033 92h4M1038 92h6M1045 92h2M1048 92h8M1057 92h7M1065 92h2M1068 92h3M1072 92h5M1078 92h9M1088 92h2M1009 94h4M1014 94h2M1017 94h9M1027 94h6M1034 94h7M1042 94h2M1045 94h4" stroke="#6a9955" stroke-width="1.2" opacity="0.62"/><path d="M1020 96h6M1020 98h26M1020 100h13M1020 102h10M1020 104h10M1020 106h8M1046 268h4M1056 268h5M1054 282h4M1025 350h4M1035 360h4M1059 360h4M1015 362h4M1055 364h4M1048 372h4M1048 442h5M1063 502h4M1020 574h5M1015 606h6M1015 620h5M1068 664h4M1055 666h4M1028 668h4M1058 668h4M1085 668h4M1055 672h4M1076 688h4M1086 690h4M1081 700h4M1017 706h4M1017 712h4M1017 716h4M1017 722h4M1017 724h4M1017 728h4M1017 736h4" stroke="#4ec9b0" stroke-width="1.2" opacity="0.62"/><path d="M1015 112h10M1015 206h10M1013 216h10M1015 220h14M1013 224h14M1015 296h9M1013 330h9M1015 348h10M1013 352h10M1015 444h9M1013 500h9M1015 578h7M1015 582h8M1015 584h9M1013 604h9M1013 608h8M1013 610h7M1015 614h8M1013 622h8M1015 704h17M1013 740h17M1013 756h10" stroke="#9cdcfe" stroke-width="1.2" opacity="0.62"/><rect x="1009" y="87" width="84" height="2" fill="#cca700" opacity="0.9"/><rect x="1009" y="267" width="84" height="2" fill="#cca700" opacity="0.9"/><rect x="1009" y="359" width="84" height="2" fill="#cca700" opacity="0.9"/><rect x="1009" y="361" width="84" height="2" fill="#cca700" opacity="0.9"/><rect x="1009" y="363" width="84" height="2" fill="#cca700" opacity="0.9"/><rect x="1009" y="371" width="84" height="2" fill="#cca700" opacity="0.9"/><rect x="1009" y="501" width="84" height="2" fill="#cca700" opacity="0.9"/><rect x="1009" y="573" width="84" height="2" fill="#cca700" opacity="0.9"/><rect x="1009" y="663" width="84" height="2" fill="#cca700" opacity="0.9"/><rect x="1009" y="665" width="84" height="2" fill="#cca700" opacity="0.9"/><rect x="1009" y="667" width="84" height="2" fill="#cca700" opacity="0.9"/><rect x="1009" y="669" width="84" height="2" fill="#cca700" opacity="0.9"/><rect x="1009" y="671" width="84" height="2" fill="#cca700" opacity="0.9"/><rect x="1009" y="687" width="84" height="2" fill="#cca700" opacity="0.9"/><rect x="1009" y="689" width="84" height="2" fill="#cca700" opacity="0.9"/><rect x="1009" y="699" width="84" height="2" fill="#cca700" opacity="0.9"/><rect x="1092" y="87" width="1" height="931" fill="#3a3a3a"/><rect x="1093" y="87" width="13" height="96" fill="#2a2a2a"/><rect x="1102" y="87" width="4" height="6" fill="#cca700"/><rect x="1102" y="303" width="4" height="6" fill="#cca700"/><rect x="1102" y="414" width="4" height="6" fill="#cca700"/><rect x="1102" y="582" width="4" height="7" fill="#cca700"/><rect x="1102" y="671" width="4" height="7" fill="#cca700"/><rect x="1102" y="783" width="4" height="10" fill="#cca700"/><rect x="1102" y="810" width="4" height="7" fill="#cca700"/><rect x="1102" y="825" width="4" height="6" fill="#cca700"/><rect x="1093" y="112" width="13" height="2" fill="#a0a0a0"/><rect x="1096" y="110" width="7" height="7" fill="#a0a0a0" opacity="0.8"/><rect x="1096" y="552" width="6" height="7" fill="#a0a0a0"/></svg>
<div class="a" style="left:1106px;top:30px;width:1px;height:988px;background:#444444"></div>
<div class="a" style="left:1107px;top:30px;width:813px;height:35px;background:#252526"></div>
<div class="a" style="left:1107px;top:30px;width:191px;height:35px;background:#1e1e1e"></div>
<svg class="a" style="left:1123px;top:41px" width="12" height="12"><g stroke="#c5c5c5" stroke-width="1.2"><path d="M1 1.5h9M1 4.5h6M1 7.5h9M1 10.5h7"/></g></svg>
<div class="t" style="left:1138px;top:38px;color:#ffffff99;font-size:13px;letter-spacing:-0.25px">conference_101719.pdf</div>
<svg class="a" style="left:1278px;top:41px" width="14" height="14"><path d="M3 3 L11 11 M11 3 L3 11" stroke="#ffffff88" stroke-width="1.2"/></svg>
<svg class="a" style="left:1885px;top:40px" width="24" height="16"><g fill="#c5c5c5"><circle cx="6" cy="8" r="1.1"/><circle cx="11" cy="8" r="1.1"/><circle cx="16" cy="8" r="1.1"/></g></svg>
<div class="a" style="left:1107px;top:65px;width:813px;height:953px;background:#ffffff;overflow:hidden" id="pdf">
<div class="a" style="left:796px;top:0;width:17px;height:953px;background:#f0f0f0"></div>
<svg class="a" style="left:796px;top:0" width="17" height="17"><path d="M4.5 11 L8.5 7 L12.5 11 Z" fill="#a3a3a3"/></svg>
<div class="a" style="left:798px;top:17px;width:13px;height:279px;background:#c1c1c1"></div>
<div class="t serif" style="left:193px;top:65.0px;font-size:32px;line-height:36px;width:410px;text-align:center;">Conference Paper Title*</div>
<div class="t serif" style="left:188px;top:117.0px;font-size:10.6px;line-height:12px;width:410px;text-align:center;word-spacing:0.65px;"><sup style="font-size:6px">*</sup>Note: Sub-titles are not captured in Xplore and should not be used</div>
<div class="t serif" style="left:80px;top:157.0px;font-size:14.3px;line-height:16px;width:220px;text-align:center;word-spacing:1.6px;">1<sup style="font-size:9px;line-height:0">st</sup> Given Name Surname</div>
<div class="t serif" style="left:80px;top:174.0px;font-size:13px;line-height:16px;width:220px;text-align:center;word-spacing:1.1px;"><i>dept. name of organization (of Aff.)</i></div>
<div class="t serif" style="left:80px;top:190.0px;font-size:13px;line-height:16px;width:220px;text-align:center;word-spacing:1.1px;"><i>name of organization (of Aff.)</i></div>
<div class="t serif" style="left:80px;top:206.0px;font-size:13px;line-height:16px;width:220px;text-align:center;word-spacing:1.1px;">City, Country</div>
<div class="t serif" style="left:80px;top:222.0px;font-size:13px;line-height:16px;width:220px;text-align:center;word-spacing:1.1px;">email address or ORCID</div>
<div class="t serif" style="left:304px;top:157.0px;font-size:14.3px;line-height:16px;width:220px;text-align:center;word-spacing:1.6px;">2<sup style="font-size:9px;line-height:0">nd</sup> Given Name Surname</div>
<div class="t serif" style="left:304px;top:174.0px;font-size:13px;line-height:16px;width:220px;text-align:center;word-spacing:1.1px;"><i>dept. name of organization (of Aff.)</i></div>
<div class="t serif" style="left:304px;top:190.0px;font-size:13px;line-height:16px;width:220px;text-align:center;word-spacing:1.1px;"><i>name of organization (of Aff.)</i></div>
<div class="t serif" style="left:304px;top:206.0px;font-size:13px;line-height:16px;width:220px;text-align:center;word-spacing:1.1px;">City, Country</div>
<div class="t serif" style="left:304px;top:222.0px;font-size:13px;line-height:16px;width:220px;text-align:center;word-spacing:1.1px;">email address or ORCID</div>
<div class="t serif" style="left:528px;top:157.0px;font-size:14.3px;line-height:16px;width:220px;text-align:center;word-spacing:1.6px;">3<sup style="font-size:9px;line-height:0">rd</sup> Given Name Surname</div>
<div class="t serif" style="left:528px;top:174.0px;font-size:13px;line-height:16px;width:220px;text-align:center;word-spacing:1.1px;"><i>dept. name of organization (of Aff.)</i></div>
<div class="t serif" style="left:528px;top:190.0px;font-size:13px;line-height:16px;width:220px;text-align:center;word-spacing:1.1px;"><i>name of organization (of Aff.)</i></div>
<div class="t serif" style="left:528px;top:206.0px;font-size:13px;line-height:16px;width:220px;text-align:center;word-spacing:1.1px;">City, Country</div>
<div class="t serif" style="left:528px;top:222.0px;font-size:13px;line-height:16px;width:220px;text-align:center;word-spacing:1.1px;">email address or ORCID</div>
<div class="t serif" style="left:50px;top:254.0px;font-size:14.3px;line-height:16px;width:220px;text-align:center;word-spacing:1.6px;">4<sup style="font-size:9px;line-height:0">th</sup> Given Name Surname</div>
<div class="t serif" style="left:50px;top:271.0px;font-size:13px;line-height:16px;width:220px;text-align:center;word-spacing:1.1px;"><i>dept. name of organization (of Aff.)</i></div>
<div class="t serif" style="left:50px;top:287.0px;font-size:13px;line-height:16px;width:220px;text-align:center;word-spacing:1.1px;"><i>name of organization (of Aff.)</i></div>
<div class="t serif" style="left:50px;top:303.0px;font-size:13px;line-height:16px;width:220px;text-align:center;word-spacing:1.1px;">City, Country</div>
<div class="t serif" style="left:50px;top:319.0px;font-size:13px;line-height:16px;width:220px;text-align:center;word-spacing:1.1px;">email address or ORCID</div>
<div class="t serif" style="left:273px;top:254.0px;font-size:14.3px;line-height:16px;width:220px;text-align:center;word-spacing:1.6px;">5<sup style="font-size:9px;line-height:0">th</sup> Given Name Surname</div>
<div class="t serif" style="left:273px;top:271.0px;font-size:13px;line-height:16px;width:220px;text-align:center;word-spacing:1.1px;"><i>dept. name of organization (of Aff.)</i></div>
<div class="t serif" style="left:273px;top:287.0px;font-size:13px;line-height:16px;width:220px;text-align:center;word-spacing:1.1px;"><i>name of organization (of Aff.)</i></div>
<div class="t serif" style="left:273px;top:303.0px;font-size:13px;line-height:16px;width:220px;text-align:center;word-spacing:1.1px;">City, Country</div>
<div class="t serif" style="left:273px;top:319.0px;font-size:13px;line-height:16px;width:220px;text-align:center;word-spacing:1.1px;">email address or ORCID</div>
<div class="t serif" style="left:496px;top:254.0px;font-size:14.3px;line-height:16px;width:220px;text-align:center;word-spacing:1.6px;">6<sup style="font-size:9px;line-height:0">th</sup> Given Name Surname</div>
<div class="t serif" style="left:496px;top:271.0px;font-size:13px;line-height:16px;width:220px;text-align:center;word-spacing:1.1px;"><i>dept. name of organization (of Aff.)</i></div>
<div class="t serif" style="left:496px;top:287.0px;font-size:13px;line-height:16px;width:220px;text-align:center;word-spacing:1.1px;"><i>name of organization (of Aff.)</i></div>
<div class="t serif" style="left:496px;top:303.0px;font-size:13px;line-height:16px;width:220px;text-align:center;word-spacing:1.1px;">City, Country</div>
<div class="t serif" style="left:496px;top:319.0px;font-size:13px;line-height:16px;width:220px;text-align:center;word-spacing:1.1px;">email address or ORCID</div>
<div class="t serif" style="left:64px;top:377.6px;font-size:11.7px;line-height:14px;width:327px;text-align:justify;text-align-last:justify;font-weight:bold;"><span style="display:inline-block;width:13px"></span><i>Abstract</i>—This document is a model and instructions for</div>
<div class="t serif" style="left:64px;top:390.6px;font-size:11.7px;line-height:14px;width:327px;text-align:justify;text-align-last:justify;font-weight:bold;">L<span style="font-size:9px;position:relative;top:-2px;margin-left:-3px">A</span>T<span style="position:relative;top:2px;margin-left:-2px">E</span>X. This and the IEEEtran.cls file define the components of</div>
<div class="t serif" style="left:64px;top:403.6px;font-size:11.7px;line-height:14px;width:327px;text-align:justify;text-align-last:justify;font-weight:bold;">your paper [title, text, heads, etc.]. *CRITICAL: Do Not Use</div>
<div class="t serif" style="left:64px;top:416.6px;font-size:11.7px;line-height:14px;width:327px;text-align:justify;text-align-last:justify;font-weight:bold;">Symbols, Special Characters, Footnotes, or Math in Paper Title</div>
<div class="t serif" style="left:64px;top:429.6px;font-size:11.7px;line-height:14px;width:327px;font-weight:bold;word-spacing:0.9px;">or Abstract.</div>
<div class="t serif" style="left:64px;top:443.6px;font-size:11.7px;line-height:14px;width:327px;font-weight:bold;word-spacing:0.9px;"><span style="display:inline-block;width:13px"></span><i>Index Terms</i>—component, formatting, style, styling, insert</div>
<div class="t serif" style="left:64px;top:478.0px;font-size:13.5px;line-height:16px;width:327px;text-align:center;letter-spacing:0.35px;">I.&nbsp; I<span style="font-size:10.4px">N</span><span style="font-size:10.4px">T</span><span style="font-size:10.4px">R</span><span style="font-size:10.4px">O</span><span style="font-size:10.4px">D</span><span style="font-size:10.4px">U</span><span style="font-size:10.4px">C</span><span style="font-size:10.4px">T</span><span style="font-size:10.4px">I</span><span style="font-size:10.4px">O</span><span style="font-size:10.4px">N</span></div>
<div class="t serif" style="left:64px;top:503.0px;font-size:13px;line-height:16px;width:327px;text-align:justify;text-align-last:justify;"><span style="display:inline-block;width:13px"></span>This document is a model and instructions for L<span style="font-size:9px;position:relative;top:-2px;margin-left:-3px;margin-right:-1px">A</span>T<span style="position:relative;top:2px;margin-left:-2px;margin-right:-1px">E</span>X. Please</div>
<div class="t serif" style="left:64px;top:519.0px;font-size:13px;line-height:16px;width:327px;">observe the conference page limits.</div>
<div class="t serif" style="left:64px;top:550.0px;font-size:13.5px;line-height:16px;width:327px;text-align:center;letter-spacing:0.35px;">II.&nbsp; E<span style="font-size:10.4px">A</span><span style="font-size:10.4px">S</span><span style="font-size:10.4px">E</span> <span style="font-size:10.4px">O</span><span style="font-size:10.4px">F</span> U<span style="font-size:10.4px">S</span><span style="font-size:10.4px">E</span></div>
<div class="t serif" style="left:64px;top:576.0px;font-size:13px;line-height:16px;width:327px;word-spacing:0.8px;"><i>A.&nbsp; Maintaining the Integrity of the Specifications</i></div>
<div class="t serif" style="left:64px;top:599.0px;font-size:13px;line-height:16px;width:327px;text-align:justify;text-align-last:justify;"><span style="display:inline-block;width:13px"></span>The IEEEtran class file is used to format your paper and</div>
<div class="t serif" style="left:64px;top:615.0px;font-size:13px;line-height:16px;width:327px;text-align:justify;text-align-last:justify;">style the text. All margins, column widths, line spaces, and</div>
<div class="t serif" style="left:64px;top:630.0px;font-size:13px;line-height:16px;width:327px;text-align:justify;text-align-last:justify;">text fonts are prescribed; please do not alter them. You may</div>
<div class="t serif" style="left:64px;top:646.0px;font-size:13px;line-height:16px;width:327px;text-align:justify;text-align-last:justify;">note peculiarities. For example, the head margin measures</div>
<div class="t serif" style="left:64px;top:661.0px;font-size:13px;line-height:16px;width:327px;text-align:justify;text-align-last:justify;">proportionately more than is customary. This measurement and</div>
<div class="t serif" style="left:64px;top:677.0px;font-size:13px;line-height:16px;width:327px;text-align:justify;text-align-last:justify;">others are deliberate, using specifications that anticipate your</div>
<div class="t serif" style="left:64px;top:692.0px;font-size:13px;line-height:16px;width:327px;text-align:justify;text-align-last:justify;">paper as one part of the entire proceedings, and not as an</div>
<div class="t serif" style="left:64px;top:708.0px;font-size:13px;line-height:16px;width:327px;text-align:justify;text-align-last:justify;">independent document. Please do not revise any of the current</div>
<div class="t serif" style="left:64px;top:724.0px;font-size:13px;line-height:16px;width:327px;">designations.</div>
<div class="t serif" style="left:64px;top:755.0px;font-size:13.5px;line-height:16px;width:327px;text-align:center;letter-spacing:0.35px;">III.&nbsp; P<span style="font-size:10.4px">R</span><span style="font-size:10.4px">E</span><span style="font-size:10.4px">P</span><span style="font-size:10.4px">A</span><span style="font-size:10.4px">R</span><span style="font-size:10.4px">E</span> Y<span style="font-size:10.4px">O</span><span style="font-size:10.4px">U</span><span style="font-size:10.4px">R</span> P<span style="font-size:10.4px">A</span><span style="font-size:10.4px">P</span><span style="font-size:10.4px">E</span><span style="font-size:10.4px">R</span> B<span style="font-size:10.4px">E</span><span style="font-size:10.4px">F</span><span style="font-size:10.4px">O</span><span style="font-size:10.4px">R</span><span style="font-size:10.4px">E</span> S<span style="font-size:10.4px">T</span><span style="font-size:10.4px">Y</span><span style="font-size:10.4px">L</span><span style="font-size:10.4px">I</span><span style="font-size:10.4px">N</span><span style="font-size:10.4px">G</span></div>
<div class="t serif" style="left:64px;top:781.0px;font-size:13px;line-height:16px;width:327px;text-align:justify;text-align-last:justify;"><span style="display:inline-block;width:13px"></span>Before you begin to format your paper, first write and save</div>
<div class="t serif" style="left:64px;top:796.0px;font-size:13px;line-height:16px;width:327px;text-align:justify;text-align-last:justify;">the content as a separate text file. Complete all content and</div>
<div class="t serif" style="left:64px;top:812.0px;font-size:13px;line-height:16px;width:327px;text-align:justify;text-align-last:justify;">organizational editing before formatting. Please note sections</div>
<div class="t serif" style="left:64px;top:827.0px;font-size:13px;line-height:16px;width:327px;text-align:justify;text-align-last:justify;"><b>??</b>–<b>??</b> below for more information on proofreading, spelling</div>
<div class="t serif" style="left:64px;top:843.0px;font-size:13px;line-height:16px;width:327px;">and grammar.</div>
<div class="t serif" style="left:64px;top:859.0px;font-size:13px;line-height:16px;width:327px;text-align:justify;text-align-last:justify;"><span style="display:inline-block;width:13px"></span>Keep your text and graphic files separate until after the text</div>
<div class="t serif" style="left:64px;top:874.0px;font-size:13px;line-height:16px;width:327px;text-align:justify;text-align-last:justify;">has been formatted and styled. Do not number text heads—</div>
<div class="t serif" style="left:64px;top:890.0px;font-size:13px;line-height:16px;width:327px;">L<span style="font-size:9px;position:relative;top:-2px;margin-left:-3px;margin-right:-1px">A</span>T<span style="position:relative;top:2px;margin-left:-2px;margin-right:-1px">E</span>X will do that for you.</div>
<div class="t serif" style="left:75px;top:924.0px;font-size:10.4px;line-height:12px;word-spacing:1.1px;">Identify applicable funding agency here. If none, delete this.</div>
<div class="t serif" style="left:406px;top:376.0px;font-size:13px;line-height:16px;word-spacing:0.5px;"><i>A.&nbsp; Abbreviations and Acronyms</i></div>
<div class="t serif" style="left:406px;top:395.0px;font-size:13px;line-height:16px;width:327px;text-align:justify;text-align-last:justify;"><span style="display:inline-block;width:13px"></span>Define abbreviations and acronyms the first time they are</div>
<div class="t serif" style="left:406px;top:411.0px;font-size:13px;line-height:16px;width:327px;text-align:justify;text-align-last:justify;">used in the text, even after they have been defined in the</div>
<div class="t serif" style="left:406px;top:426.0px;font-size:13px;line-height:16px;width:327px;text-align:justify;text-align-last:justify;">abstract. Abbreviations such as IEEE, SI, MKS, CGS, ac, dc,</div>
<div class="t serif" style="left:406px;top:442.0px;font-size:13px;line-height:16px;width:327px;text-align:justify;text-align-last:justify;">and rms do not have to be defined. Do not use abbreviations</div>
<div class="t serif" style="left:406px;top:458.0px;font-size:13px;line-height:16px;width:327px;">in the title or heads unless they are unavoidable.</div>
<div class="t serif" style="left:406px;top:480.0px;font-size:13px;line-height:16px;"><i>B.&nbsp; Units</i></div>
<div class="t serif" style="left:419px;top:500.0px;font-size:17px;line-height:16px;">•</div>
<div class="t serif" style="left:433px;top:499.0px;font-size:13px;line-height:16px;width:300px;text-align:justify;text-align-last:justify;">Use either SI (MKS) or CGS as primary units. (SI units</div>
<div class="t serif" style="left:433px;top:515.0px;font-size:13px;line-height:16px;width:300px;text-align:justify;text-align-last:justify;">are encouraged.) English units may be used as secondary</div>
<div class="t serif" style="left:433px;top:530.0px;font-size:13px;line-height:16px;width:300px;text-align:justify;text-align-last:justify;">units (in parentheses). An exception would be the use of</div>
<div class="t serif" style="left:433px;top:546.0px;font-size:13px;line-height:16px;width:300px;text-align:justify;text-align-last:justify;"><span style="letter-spacing:-0.15px">English units as identifiers in trade, such as “3.5-inch disk</span></div>
<div class="t serif" style="left:433px;top:561.0px;font-size:13px;line-height:16px;width:300px;">drive”.</div>
<div class="t serif" style="left:419px;top:578.0px;font-size:17px;line-height:16px;">•</div>
<div class="t serif" style="left:433px;top:577.0px;font-size:13px;line-height:16px;width:300px;text-align:justify;text-align-last:justify;">Avoid combining SI and CGS units, such as current</div>
<div class="t serif" style="left:433px;top:592.0px;font-size:13px;line-height:16px;width:300px;text-align:justify;text-align-last:justify;">in amperes and magnetic field in oersteds. This often</div>
<div class="t serif" style="left:433px;top:608.0px;font-size:13px;line-height:16px;width:300px;text-align:justify;text-align-last:justify;">leads to confusion because equations do not balance</div>
<div class="t serif" style="left:433px;top:624.0px;font-size:13px;line-height:16px;width:300px;text-align:justify;text-align-last:justify;">dimensionally. If you must use mixed units, clearly state</div>
<div class="t serif" style="left:433px;top:639.0px;font-size:13px;line-height:16px;width:300px;">the units for each quantity that you use in an equation.</div>
<div class="t serif" style="left:419px;top:656.0px;font-size:17px;line-height:16px;">•</div>
<div class="t serif" style="left:433px;top:655.0px;font-size:13px;line-height:16px;width:300px;text-align:justify;text-align-last:justify;">Do not mix complete spellings and abbreviations of units:</div>
<div class="t serif" style="left:433px;top:670.0px;font-size:13px;line-height:16px;width:300px;text-align:justify;text-align-last:justify;">“Wb/m<sup style="font-size:8px;line-height:0">2</sup>” or “webers per square meter”, not “webers/m<sup style="font-size:8px;line-height:0">2</sup>”.</div>
<div class="t serif" style="left:433px;top:686.0px;font-size:13px;line-height:16px;width:300px;text-align:justify;text-align-last:justify;">Spell out units when they appear in text: “. . . a few</div>
<div class="t serif" style="left:433px;top:702.0px;font-size:13px;line-height:16px;width:300px;">henries”, not “. . . a few H”.</div>
<div class="t serif" style="left:419px;top:718.0px;font-size:17px;line-height:16px;">•</div>
<div class="t serif" style="left:433px;top:717.0px;font-size:13px;line-height:16px;width:300px;text-align:justify;text-align-last:justify;">Use a zero before decimal points: “0.25”, not “.25”. Use</div>
<div class="t serif" style="left:433px;top:733.0px;font-size:13px;line-height:16px;width:300px;">“cm<sup style="font-size:8px;line-height:0">3</sup>”, not “cc”.)</div>
<div class="t serif" style="left:406px;top:755.0px;font-size:13px;line-height:16px;"><i>C.&nbsp; Equations</i></div>
<div class="t serif" style="left:406px;top:774.0px;font-size:13px;line-height:16px;width:327px;text-align:justify;text-align-last:justify;"><span style="display:inline-block;width:13px"></span>Number equations consecutively. To make your equations</div>
<div class="t serif" style="left:406px;top:789.0px;font-size:13px;line-height:16px;width:327px;text-align:justify;text-align-last:justify;">more compact, you may use the solidus ( / ), the exp</div>
<div class="t serif" style="left:406px;top:805.0px;font-size:13px;line-height:16px;width:327px;text-align:justify;text-align-last:justify;">function, or appropriate exponents. Italicize Roman symbols</div>
<div class="t serif" style="left:406px;top:821.0px;font-size:13px;line-height:16px;width:327px;text-align:justify;text-align-last:justify;">for quantities and variables, but not Greek symbols. Use a</div>
<div class="t serif" style="left:406px;top:836.0px;font-size:13px;line-height:16px;width:327px;text-align:justify;text-align-last:justify;">long dash rather than a hyphen for a minus sign. Punctuate</div>
<div class="t serif" style="left:406px;top:852.0px;font-size:13px;line-height:16px;width:327px;text-align:justify;text-align-last:justify;">equations with commas or periods when they are part of a</div>
<div class="t serif" style="left:406px;top:868.0px;font-size:13px;line-height:16px;width:327px;">sentence, as in:</div>
<div class="t serif" style="left:543px;top:883.0px;font-size:13.5px;line-height:16px;"><i>a</i><span style="font-size:16px;margin:0 3.5px;position:relative;top:0.5px">+</span><i>b</i><span style="font-size:16px;margin:0 3.5px;position:relative;top:0.5px">=</span><i>γ</i></div>
<div class="t serif" style="left:718px;top:883.0px;font-size:13px;line-height:16px;">(1)</div>
<div class="t serif" style="left:406px;top:905.0px;font-size:13px;line-height:16px;width:327px;text-align:justify;text-align-last:justify;"><span style="display:inline-block;width:13px"></span>Be sure that the symbols in your equation have been defined</div>
<div class="t serif" style="left:406px;top:921.0px;font-size:13px;line-height:16px;width:327px;text-align:justify;text-align-last:justify;">before or immediately following the equation. Use “(<b>??</b>)”, not</div>
</div>
<div class="a" style="left:0;top:1018px;width:1920px;height:22px;background:#68217a"></div>
<svg class="a" style="left:0;top:1018px" width="1920" height="22"><g fill="none" stroke="#ffffff" stroke-width="1.1">
<circle cx="21.5" cy="11" r="6"/><path d="M18.8 8.3 L24.2 13.7 M24.2 8.3 L18.8 13.7"/>
<path d="M48.5 4.8 L55 16.5 H42 Z" stroke-linejoin="round"/><path d="M48.5 8.5 V12.5 M48.5 14 V15"/>
<path d="M89.5 11.5 L93 15 L100 6.5" stroke-width="1.3"/>
<circle cx="1865.5" cy="11" r="2.6"/><path d="M1861.5 17.5 Q1862 14 1865.5 14 Q1868.5 14 1869.5 17"/>
<path d="M1867.5 9 V5.5 H1875 V11 H1872 L1869.8 13.2 V11.5"/>
<path d="M1893 16 H1904 M1894.8 16 V10.8 A3.7 3.7 0 0 1 1902.2 10.8 V16 M1897 17.8 Q1898.5 19.3 1900 17.8 M1898.5 5.8 V7"/>
</g></svg>
<div class="t" style="left:31px;top:1018px;color:#fff;font-size:13px">0</div>
<div class="t" style="left:58px;top:1018px;color:#fff;font-size:13px">19</div>
<div class="t" style="left:1602px;top:1018px;color:#fff;font-size:13px;letter-spacing:-0.6px">行 11，列 20</div>
<div class="t" style="left:1687px;top:1018px;color:#fff;font-size:13px;letter-spacing:-0.6px">空格: 4</div>
<div class="t" style="left:1739px;top:1018px;color:#fff;font-size:13px;letter-spacing:-0.6px">UTF-8</div>
<div class="t" style="left:1787px;top:1018px;color:#fff;font-size:13px;letter-spacing:-0.6px">LF</div>
<div class="t" style="left:1815px;top:1018px;color:#fff;font-size:13px;letter-spacing:-0.6px">LaTeX</div>
<div class="a" style="left:54px;top:82px;width:243px;height:158px;border:3px solid #ff2a1f;border-radius:4px"></div>
<div class="a" style="left:53px;top:242px;width:244px;height:91px;border:3px solid #ff2a1f;border-radius:4px"></div>
<div class="t" style="left:148px;top:57px;color:#ff2a1f;font-size:21px;line-height:26px;letter-spacing:0px">1.选择编译方式</div>
<div class="t" style="left:224px;top:346px;color:#ff2a1f;font-size:21px;line-height:26px;letter-spacing:0px">2.选择生成后的</div>
<div class="t" style="left:224px;top:373.5px;color:#ff2a1f;font-size:21px;line-height:26px;letter-spacing:0px">文件查看方式</div>
<div class="t" style="left:588px;top:403px;color:#ff2a1f;font-size:21px;line-height:26px;letter-spacing:0.5px">这里是latex代码</div>
<div class="t" style="left:1133px;top:90px;color:#ff2a1f;font-size:21px;line-height:26px;letter-spacing:0px">3.这里是生成好的文件</div>
<div class="a" style="left:1821px;top:996px;width:41px;height:22px;border-radius:50%;background:linear-gradient(#f5a0a0,#ee6868)"></div>
<div class="t" style="left:1826px;top:995px;color:#fff;font-size:17px;line-height:22px;font-style:italic;letter-spacing:-0.5px">php</div>
<div class="t" style="left:1867px;top:996px;color:#3a3030;font-size:14px;line-height:22px">中文网</div>
<svg class="a" style="left:1907px;top:1004px" width="10" height="8"><path d="M1 2 H8 L4.5 6 Z" fill="#505050"/></svg>
</body></html>
